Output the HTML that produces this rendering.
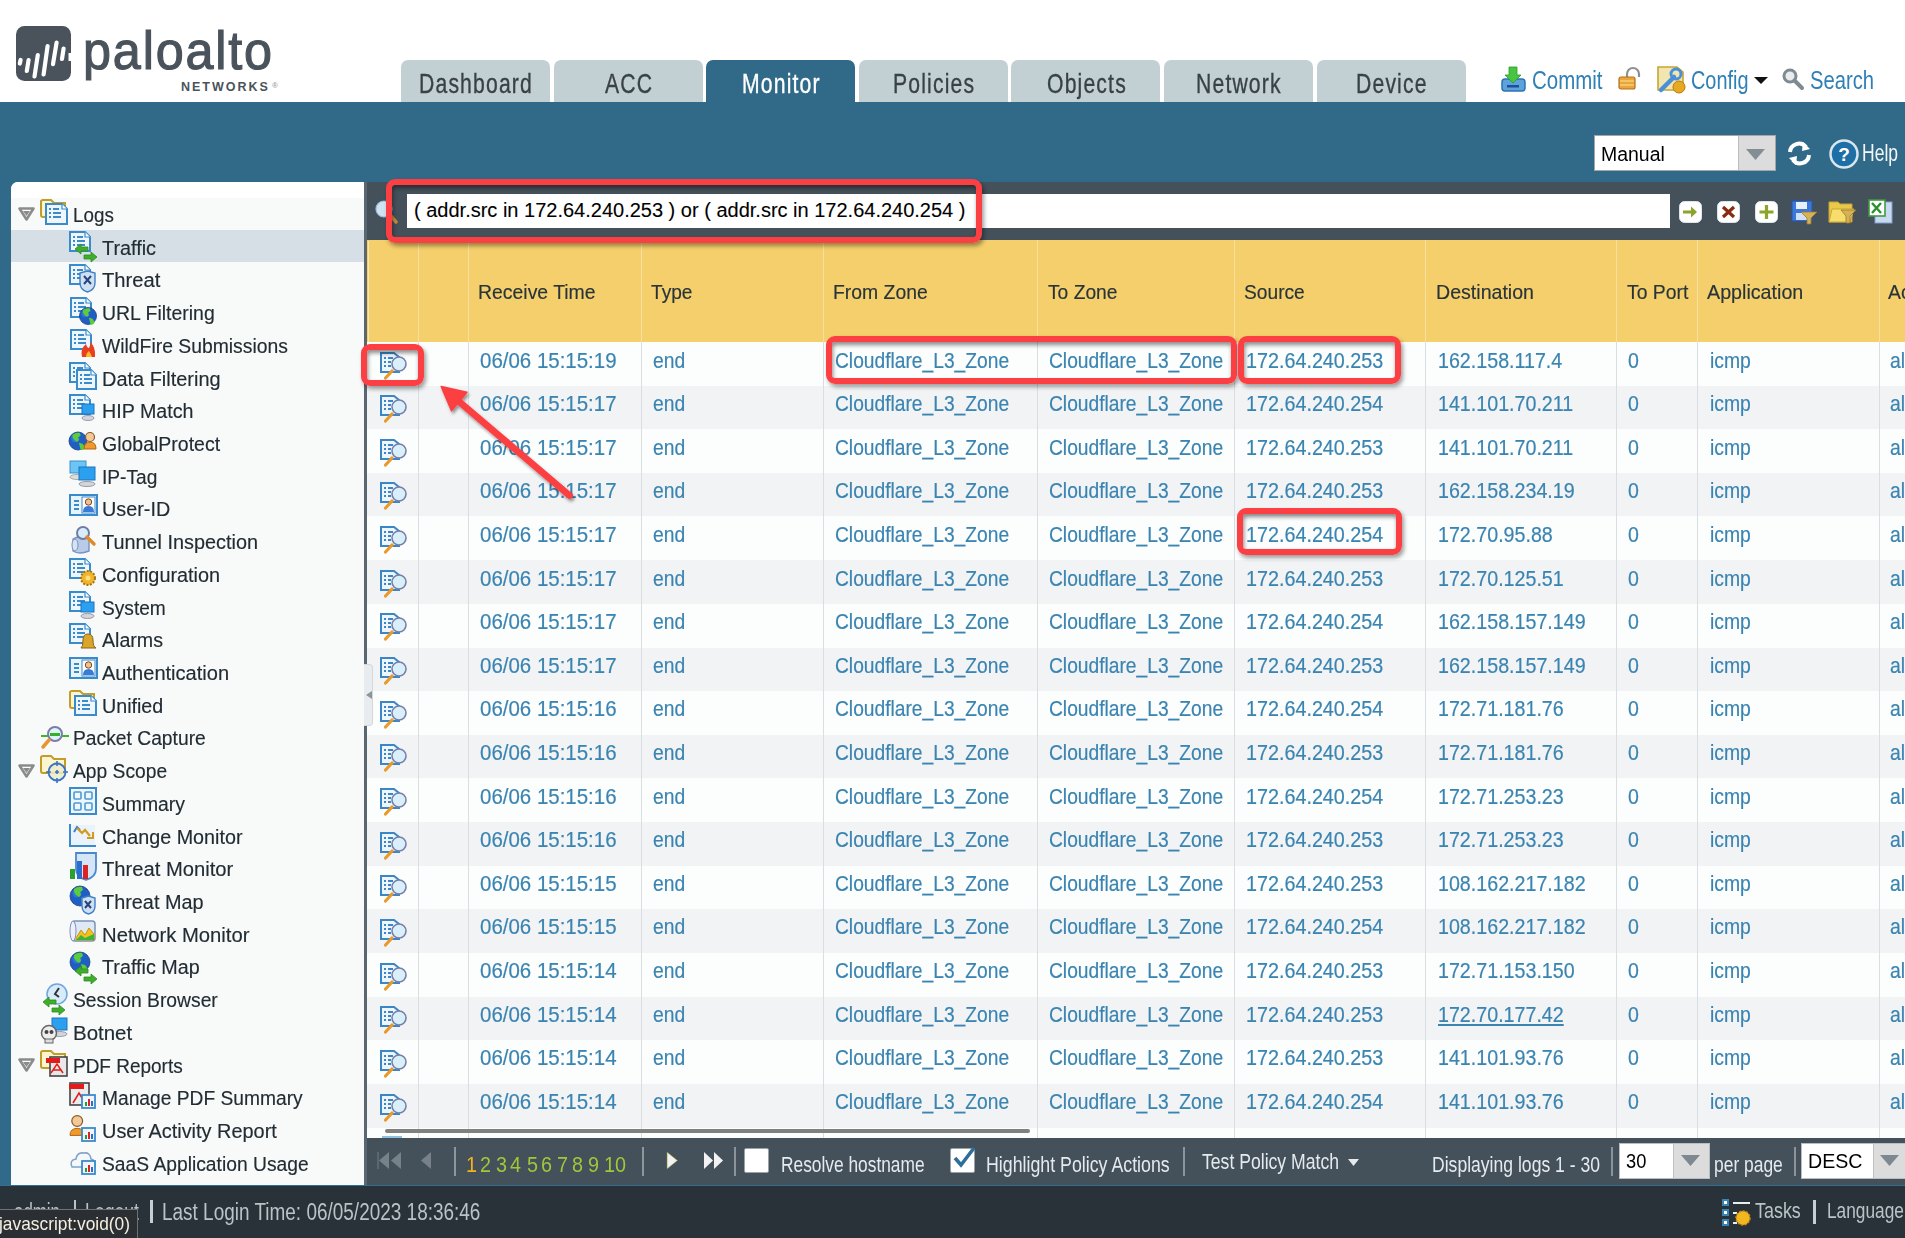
<!DOCTYPE html><html><head><meta charset="utf-8"><style>
*{margin:0;padding:0;box-sizing:border-box}
html,body{width:1905px;height:1238px;overflow:hidden;background:#fff;font-family:"Liberation Sans",sans-serif}
.abs{position:absolute}
.t{position:absolute;white-space:nowrap;line-height:normal;transform-origin:0 0}
svg{position:absolute;overflow:visible}
.tab{position:absolute;top:60px;height:42px;width:149px;background:#c2d0d4;border-radius:7px 7px 0 0}
.tab.on{background:#316a89}
</style></head><body>
<div class="abs" style="left:0.0px;top:0.0px;width:1905.0px;height:102.0px;background:#fff;"></div>
<svg style="left:16.2px;top:26.0px" width="55" height="55" viewBox="0 0 55 55"><rect x="0" y="0" width="55" height="55" rx="8.5" fill="#4a535b"/>
<g stroke="#fff" stroke-width="4.2" stroke-linecap="round">
<line x1="4.6" y1="34" x2="3.8" y2="37.5"/><line x1="12.6" y1="34" x2="10.8" y2="45"/><line x1="21.8" y1="29" x2="18.5" y2="50.5"/>
<line x1="31.6" y1="20" x2="27.6" y2="48.5"/><line x1="40.6" y1="16.5" x2="37" y2="38.2"/><line x1="47.6" y1="22.5" x2="46" y2="33"/>
</g><rect x="52.5" y="27" width="3" height="8" fill="#fff"/></svg>
<div class="t" style="left:83px;top:17.6px;font-size:55px;color:#4a535b;letter-spacing:2px;-webkit-text-stroke:1.2px #4a535b;transform-origin:0 49.8px;transform:scale(0.915,0.99)">paloalto</div>
<div class="t" style="left:181.0px;top:79.7px;font-size:12.5px;color:#4a535b;font-weight:bold;letter-spacing:2px;">NETWORKS</div>
<div class="t" style="left:272.0px;top:80.8px;font-size:8px;color:#8a9096;">&#174;</div>
<div class="tab" style="left:401.0px"></div>
<div class="t" style="left:419.0px;top:67.6px;font-size:27.5px;color:#394148;transform:scaleX(0.7700);letter-spacing:1.5px;-webkit-text-stroke:0.35px #394148;">Dashboard</div>
<div class="tab" style="left:553.6px"></div>
<div class="t" style="left:604.5px;top:67.6px;font-size:27.5px;color:#394148;transform:scaleX(0.7700);letter-spacing:1.5px;-webkit-text-stroke:0.35px #394148;">ACC</div>
<div class="tab on" style="left:706.2px"></div>
<div class="t" style="left:741.9px;top:67.6px;font-size:27.5px;color:#fff;transform:scaleX(0.7700);letter-spacing:1.5px;-webkit-text-stroke:0.35px #fff;">Monitor</div>
<div class="tab" style="left:858.8px"></div>
<div class="t" style="left:892.7px;top:67.6px;font-size:27.5px;color:#394148;transform:scaleX(0.7700);letter-spacing:1.5px;-webkit-text-stroke:0.35px #394148;">Policies</div>
<div class="tab" style="left:1011.4px"></div>
<div class="t" style="left:1046.5px;top:67.6px;font-size:27.5px;color:#394148;transform:scaleX(0.7700);letter-spacing:1.5px;-webkit-text-stroke:0.35px #394148;">Objects</div>
<div class="tab" style="left:1164.0px"></div>
<div class="t" style="left:1196.1px;top:67.6px;font-size:27.5px;color:#394148;transform:scaleX(0.7700);letter-spacing:1.5px;-webkit-text-stroke:0.35px #394148;">Network</div>
<div class="tab" style="left:1316.6px"></div>
<div class="t" style="left:1355.8px;top:67.6px;font-size:27.5px;color:#394148;transform:scaleX(0.7700);letter-spacing:1.5px;-webkit-text-stroke:0.35px #394148;">Device</div>
<svg style="left:1500.0px;top:66.0px" width="27" height="27" viewBox="0 0 27 27"><rect x="2" y="13" width="23" height="12" rx="3" fill="#5da2da" stroke="#2b74b4" stroke-width="1.5"/>
<rect x="7" y="19" width="12" height="2.5" fill="#1f4f99"/>
<path d="M9 1h8v8h4l-8 8-8-8h4z" fill="#47c540" stroke="#2f9a2a" stroke-width="0.8"/></svg>
<div class="t" style="left:1532.0px;top:65.4px;font-size:26px;color:#2f80b6;transform:scaleX(0.7873);">Commit</div>
<svg style="left:1618.0px;top:68.0px" width="24" height="22" viewBox="0 0 24 22"><path d="M9 9V6a6 6 0 0 1 12 0v3" fill="none" stroke="#8f8f8f" stroke-width="2.2"/>
<rect x="1" y="9" width="16" height="12" rx="2" fill="#eaa63a" stroke="#b4701e" stroke-width="1.2"/>
<line x1="2" y1="13" x2="16" y2="13" stroke="#f8d888" stroke-width="1.2"/><line x1="2" y1="17" x2="16" y2="17" stroke="#f8d888" stroke-width="1.2"/></svg>
<svg style="left:1657.0px;top:66.0px" width="28" height="27" viewBox="0 0 28 27"><path d="M1 1h19l6 5v18H1z" fill="#f1e6b0" stroke="#c7a533" stroke-width="1.6"/>
<path d="M4 24l13-13" stroke="#4a8fd8" stroke-width="4.5" stroke-linecap="round"/>
<circle cx="19" cy="8" r="5" fill="none" stroke="#4a8fd8" stroke-width="3"/>
<circle cx="22" cy="21" r="6" fill="#e8a922" stroke="#b57a10" stroke-width="1"/></svg>
<div class="t" style="left:1691.0px;top:65.3px;font-size:26px;color:#2f80b6;transform:scaleX(0.7652);">Config</div>
<svg style="left:1754.0px;top:77.0px" width="14" height="7" viewBox="0 0 14 7"><path d="M0 0h14l-7 7z" fill="#111"/></svg>
<svg style="left:1782.0px;top:68.0px" width="22" height="22" viewBox="0 0 22 22"><circle cx="8" cy="8" r="6" fill="#e8ecef" stroke="#7f8a91" stroke-width="3"/>
<line x1="12.5" y1="12.5" x2="20" y2="20" stroke="#7f8a91" stroke-width="4" stroke-linecap="round"/></svg>
<div class="t" style="left:1810.0px;top:65.3px;font-size:26px;color:#2f80b6;transform:scaleX(0.7771);">Search</div>
<div class="abs" style="left:0.0px;top:102.0px;width:1905.0px;height:1084.0px;background:#316a89;"></div>
<div class="abs" style="left:1594.0px;top:135.0px;width:182.0px;height:36.0px;background:#fff;border:1px solid #a6a6a6;"></div>
<div class="abs" style="left:1738.0px;top:136.0px;width:37.0px;height:34.0px;background:#dcdcdc;border-left:1px solid #bdbdbd;"></div>
<svg style="left:1746.0px;top:149.0px" width="19" height="11" viewBox="0 0 19 11"><path d="M0 0h19l-9.5 11z" fill="#848d94"/></svg>
<div class="t" style="left:1601.0px;top:142.7px;font-size:20px;color:#000;transform:scaleX(0.9727);">Manual</div>
<svg style="left:1786.0px;top:142.0px" width="27" height="23" viewBox="0 0 27 23"><path d="M4 10a9 9 0 0 1 16-5" fill="none" stroke="#fff" stroke-width="4"/>
<path d="M17 0l7 7-8 2z" fill="#fff"/>
<path d="M23 13a9 9 0 0 1-16 5" fill="none" stroke="#fff" stroke-width="4"/>
<path d="M10 23l-7-7 8-2z" fill="#fff"/></svg>
<svg style="left:1829.0px;top:139.0px" width="30" height="30" viewBox="0 0 30 30"><circle cx="15" cy="15" r="13.5" fill="#1d6fa6" stroke="#d8e6ef" stroke-width="2.5"/>
<text x="15" y="22" font-family="Liberation Sans" font-weight="bold" font-size="19" fill="#fff" text-anchor="middle">?</text></svg>
<div class="t" style="left:1862.0px;top:139.3px;font-size:24px;color:#f4f7f9;transform:scaleX(0.7296);">Help</div>
<div class="abs" style="left:11.0px;top:182.0px;width:353.0px;height:1004.0px;background:#f8fafa;border-radius:7px 0 0 0;"></div>
<div class="abs" style="left:11.0px;top:182.0px;width:353.0px;height:16.0px;background:#ffffff;border-radius:7px 0 0 0;"></div>
<svg style="left:18.0px;top:207.4px" width="17" height="14" viewBox="0 0 17 14"><path d="M1.5 1.5h14l-7 11z" fill="#fff" stroke="#8b8b8b" stroke-width="2.6" stroke-linejoin="round"/><path d="M5 4h7l-3.5 5z" fill="#8b8b8b"/></svg>
<svg style="left:40.0px;top:198.0px" width="30" height="32" viewBox="0 0 30 32"><path d="M1 3v14a2 2 0 0 0 2 2h22v-14h-11l-3-3h-8a2 2 0 0 0-2 1z" fill="#fbf5d0" stroke="#c39d2a" stroke-width="2"/><path d="M6 6h16l5 5v15h-21z" fill="#eef5fb" stroke="#3a8bcb" stroke-width="2"/><path d="M22 6v5h5" fill="#fff" stroke="#3a8bcb" stroke-width="1.2"/><g fill="#3a8bcb"><rect x="9" y="10" width="2" height="2"/><rect x="9" y="14" width="2" height="2"/><rect x="9" y="18" width="2" height="2"/><rect x="13" y="10" width="6" height="2"/><rect x="13" y="14" width="8" height="2"/><rect x="13" y="18" width="8" height="2"/></g></svg>
<div class="t" style="left:73.0px;top:203.9px;font-size:20px;color:#222c33;transform:scaleX(0.9406);-webkit-text-stroke:0.15px #222c33;">Logs</div>
<div class="abs" style="left:11.0px;top:229.8px;width:353.0px;height:32.7px;background:#d5dfe5;"></div>
<svg style="left:69.0px;top:230.7px" width="30" height="32" viewBox="0 0 30 32"><path d="M1 1h15l5 5v14h-20z" fill="#eef5fb" stroke="#3a8bcb" stroke-width="2"/><path d="M16 1v5h5" fill="#fff" stroke="#3a8bcb" stroke-width="1.2"/><g fill="#3a8bcb"><rect x="4" y="5" width="2" height="2"/><rect x="4" y="9" width="2" height="2"/><rect x="4" y="13" width="2" height="2"/><rect x="8" y="5" width="6" height="2"/><rect x="8" y="9" width="8" height="2"/><rect x="8" y="13" width="8" height="2"/></g><path d="M6 18l6-5v3h7v4h-7v3z" fill="#3fae2b" stroke="#2f8a20" stroke-width="0.8"/><path d="M28 26l-6-5v3h-7v4h7v3z" fill="#3fae2b" stroke="#2f8a20" stroke-width="0.8"/></svg>
<div class="t" style="left:102.0px;top:236.6px;font-size:20px;color:#222c33;transform:scaleX(0.9914);-webkit-text-stroke:0.15px #222c33;">Traffic</div>
<svg style="left:69.0px;top:263.4px" width="30" height="32" viewBox="0 0 30 32"><path d="M1 2h15l5 5v14h-20z" fill="#eef5fb" stroke="#3a8bcb" stroke-width="2"/><path d="M16 2v5h5" fill="#fff" stroke="#3a8bcb" stroke-width="1.2"/><g fill="#3a8bcb"><rect x="4" y="6" width="2" height="2"/><rect x="4" y="10" width="2" height="2"/><rect x="4" y="14" width="2" height="2"/><rect x="8" y="6" width="6" height="2"/><rect x="8" y="10" width="8" height="2"/><rect x="8" y="14" width="8" height="2"/></g><path d="M11 10l7.5 -2l7.5 2v9.5q0 7.6000000000000005 -7.5 9.5q-7.5 -1.9000000000000001 -7.5 -9.5z" fill="#cfe0f3" stroke="#3f7fc4" stroke-width="1.4"/><path d="M15 13l7 8M22 13l-7 8" stroke="#28457a" stroke-width="2"/></svg>
<div class="t" style="left:102.0px;top:269.3px;font-size:20px;color:#222c33;transform:scaleX(1.0102);-webkit-text-stroke:0.15px #222c33;">Threat</div>
<svg style="left:69.0px;top:296.2px" width="30" height="32" viewBox="0 0 30 32"><path d="M2 2h15l5 5v14h-20z" fill="#eef5fb" stroke="#3a8bcb" stroke-width="2"/><path d="M17 2v5h5" fill="#fff" stroke="#3a8bcb" stroke-width="1.2"/><g fill="#3a8bcb"><rect x="5" y="6" width="2" height="2"/><rect x="5" y="10" width="2" height="2"/><rect x="5" y="14" width="2" height="2"/><rect x="9" y="6" width="6" height="2"/><rect x="9" y="10" width="8" height="2"/><rect x="9" y="14" width="8" height="2"/></g><circle cx="19" cy="20" r="8.5" fill="#1f5fc4" stroke="#163f8a" stroke-width="0.8"/><circle cx="16.45" cy="17.45" r="3.825" fill="#3f86e0" opacity="0.6"/><path transform="translate(19,20) scale(0.85)" d="M-6 -7q4 -3 8 -2l1 3l-3 2l1 3l-2 2l-3 -2l-2 -3z M1 2l4 1l3 4l-2 3l-3 0l-1 -4z" fill="#5ccc3c"/></svg>
<div class="t" style="left:102.0px;top:302.0px;font-size:20px;color:#222c33;transform:scaleX(0.9719);-webkit-text-stroke:0.15px #222c33;">URL Filtering</div>
<svg style="left:69.0px;top:328.9px" width="30" height="32" viewBox="0 0 30 32"><path d="M2 1h15l5 5v14h-20z" fill="#eef5fb" stroke="#3a8bcb" stroke-width="2"/><path d="M17 1v5h5" fill="#fff" stroke="#3a8bcb" stroke-width="1.2"/><g fill="#3a8bcb"><rect x="5" y="5" width="2" height="2"/><rect x="5" y="9" width="2" height="2"/><rect x="5" y="13" width="2" height="2"/><rect x="9" y="5" width="6" height="2"/><rect x="9" y="9" width="8" height="2"/><rect x="9" y="13" width="8" height="2"/></g><path d="M13 28q-2-8 4-13q1 4 3 4q2-3 1-6q6 5 5 15z" fill="#e8401f"/><path d="M17 28q0-4 3-6q2 3 3 6z" fill="#ffb830"/></svg>
<div class="t" style="left:102.0px;top:334.7px;font-size:20px;color:#222c33;transform:scaleX(0.9670);-webkit-text-stroke:0.15px #222c33;">WildFire Submissions</div>
<svg style="left:69.0px;top:361.6px" width="30" height="32" viewBox="0 0 30 32"><path d="M1 1h15l5 5v14h-20z" fill="#eef5fb" stroke="#3a8bcb" stroke-width="2"/><path d="M16 1v5h5" fill="#fff" stroke="#3a8bcb" stroke-width="1.2"/><g fill="#3a8bcb"><rect x="4" y="5" width="2" height="2"/><rect x="4" y="9" width="2" height="2"/><rect x="4" y="13" width="2" height="2"/><rect x="8" y="5" width="6" height="2"/><rect x="8" y="9" width="8" height="2"/><rect x="8" y="13" width="8" height="2"/></g><path d="M8 8h14l5 5v14h-19z" fill="#eef5fb" stroke="#3a8bcb" stroke-width="2"/><path d="M22 8v5h5" fill="#fff" stroke="#3a8bcb" stroke-width="1.2"/><g fill="#3a8bcb"><rect x="11" y="12" width="2" height="2"/><rect x="11" y="16" width="2" height="2"/><rect x="11" y="20" width="2" height="2"/><rect x="15" y="12" width="6" height="2"/><rect x="15" y="16" width="8" height="2"/><rect x="15" y="20" width="8" height="2"/></g></svg>
<div class="t" style="left:102.0px;top:367.5px;font-size:20px;color:#222c33;transform:scaleX(0.9972);-webkit-text-stroke:0.15px #222c33;">Data Filtering</div>
<svg style="left:69.0px;top:394.3px" width="30" height="32" viewBox="0 0 30 32"><path d="M1 1h15l5 5v14h-20z" fill="#eef5fb" stroke="#3a8bcb" stroke-width="2"/><path d="M16 1v5h5" fill="#fff" stroke="#3a8bcb" stroke-width="1.2"/><g fill="#3a8bcb"><rect x="4" y="5" width="2" height="2"/><rect x="4" y="9" width="2" height="2"/><rect x="4" y="13" width="2" height="2"/><rect x="8" y="5" width="6" height="2"/><rect x="8" y="9" width="8" height="2"/><rect x="8" y="13" width="8" height="2"/></g><rect x="13" y="10" width="12" height="10" fill="#2aa0ee" stroke="#1b74c0" stroke-width="1"/><ellipse cx="19.0" cy="24" rx="6.0" ry="2.5" fill="#d4d4dc" stroke="#9a9aa8" stroke-width="1"/></svg>
<div class="t" style="left:102.0px;top:400.2px;font-size:20px;color:#222c33;transform:scaleX(0.9837);-webkit-text-stroke:0.15px #222c33;">HIP Match</div>
<svg style="left:69.0px;top:427.0px" width="30" height="32" viewBox="0 0 30 32"><circle cx="9" cy="14" r="9" fill="#1f5fc4" stroke="#163f8a" stroke-width="0.8"/><circle cx="6.3" cy="11.3" r="4.05" fill="#3f86e0" opacity="0.6"/><path transform="translate(9,14) scale(0.9)" d="M-6 -7q4 -3 8 -2l1 3l-3 2l1 3l-2 2l-3 -2l-2 -3z M1 2l4 1l3 4l-2 3l-3 0l-1 -4z" fill="#5ccc3c"/><circle cx="21.0" cy="10.0" r="4.5" fill="#f3c999" stroke="#8a5a26" stroke-width="1.2"/><path d="M15 22.0q0 -7 6.0 -7q6.0 0 6.0 7z" fill="#ef9a2c" stroke="#b36412" stroke-width="1"/></svg>
<div class="t" style="left:102.0px;top:432.9px;font-size:20px;color:#222c33;transform:scaleX(0.9745);-webkit-text-stroke:0.15px #222c33;">GlobalProtect</div>
<svg style="left:69.0px;top:459.8px" width="30" height="32" viewBox="0 0 30 32"><rect x="1" y="1" width="16" height="12" fill="#6cc6f5" stroke="#3a90cc"/><ellipse cx="8" cy="17" rx="7" ry="2.5" fill="#ddd" stroke="#aaa"/><rect x="10" y="7" width="16" height="13" fill="#2aa0ee" stroke="#1b74c0" stroke-width="1"/><ellipse cx="18.0" cy="24" rx="8.0" ry="2.5" fill="#d4d4dc" stroke="#9a9aa8" stroke-width="1"/></svg>
<div class="t" style="left:102.0px;top:465.6px;font-size:20px;color:#222c33;transform:scaleX(0.9565);-webkit-text-stroke:0.15px #222c33;">IP-Tag</div>
<svg style="left:69.0px;top:492.5px" width="30" height="32" viewBox="0 0 30 32"><rect x="1" y="2" width="27" height="20" fill="#e9f3fb" stroke="#3a8bcb" stroke-width="2"/><g fill="#3a8bcb"><rect x="5" y="7" width="5" height="2"/><rect x="5" y="11" width="5" height="2"/><rect x="5" y="15" width="5" height="2"/></g><rect x="13" y="4" width="13" height="16" fill="#fff" stroke="#3a8bcb" stroke-width="1"/><circle cx="19.5" cy="9" r="3.2" fill="#f1c28f" stroke="#7a4a1a" stroke-width="1"/><path d="M14 19q0 -6 5.5 -6q5.5 0 5.5 6z" fill="#3a7bd5"/></svg>
<div class="t" style="left:102.0px;top:498.3px;font-size:20px;color:#222c33;transform:scaleX(0.9902);-webkit-text-stroke:0.15px #222c33;">User-ID</div>
<svg style="left:69.0px;top:525.2px" width="30" height="32" viewBox="0 0 30 32"><path d="M4 14q6-4 16 0v12q-10 4-16 0z" fill="#b9cbe6" stroke="#7693c4" stroke-width="1.4"/><ellipse cx="6" cy="20" rx="3" ry="6" fill="#d8e3f2" stroke="#7693c4"/><circle cx="14" cy="8" r="6" fill="#d9ecfb" stroke="#6c7ea6" stroke-width="2"/><path d="M18 12l7 7" stroke="#e08a2a" stroke-width="3.5" stroke-linecap="round"/></svg>
<div class="t" style="left:102.0px;top:531.1px;font-size:20px;color:#222c33;transform:scaleX(0.9932);-webkit-text-stroke:0.15px #222c33;">Tunnel Inspection</div>
<svg style="left:69.0px;top:557.9px" width="30" height="32" viewBox="0 0 30 32"><path d="M1 1h15l5 5v14h-20z" fill="#eef5fb" stroke="#3a8bcb" stroke-width="2"/><path d="M16 1v5h5" fill="#fff" stroke="#3a8bcb" stroke-width="1.2"/><g fill="#3a8bcb"><rect x="4" y="5" width="2" height="2"/><rect x="4" y="9" width="2" height="2"/><rect x="4" y="13" width="2" height="2"/><rect x="8" y="5" width="6" height="2"/><rect x="8" y="9" width="8" height="2"/><rect x="8" y="13" width="8" height="2"/></g><circle cx="19" cy="20" r="7" fill="#f0b52a" stroke="#a87410" stroke-width="2" stroke-dasharray="2 1.5"/><circle cx="19" cy="20" r="2.5" fill="#ffe07a"/></svg>
<div class="t" style="left:102.0px;top:563.8px;font-size:20px;color:#222c33;transform:scaleX(0.9927);-webkit-text-stroke:0.15px #222c33;">Configuration</div>
<svg style="left:69.0px;top:590.6px" width="30" height="32" viewBox="0 0 30 32"><path d="M1 1h15l5 5v14h-20z" fill="#eef5fb" stroke="#3a8bcb" stroke-width="2"/><path d="M16 1v5h5" fill="#fff" stroke="#3a8bcb" stroke-width="1.2"/><g fill="#3a8bcb"><rect x="4" y="5" width="2" height="2"/><rect x="4" y="9" width="2" height="2"/><rect x="4" y="13" width="2" height="2"/><rect x="8" y="5" width="6" height="2"/><rect x="8" y="9" width="8" height="2"/><rect x="8" y="13" width="8" height="2"/></g><rect x="12" y="11" width="13" height="10" fill="#2aa0ee" stroke="#1b74c0" stroke-width="1"/><ellipse cx="18.5" cy="25" rx="6.5" ry="2.5" fill="#d4d4dc" stroke="#9a9aa8" stroke-width="1"/></svg>
<div class="t" style="left:102.0px;top:596.5px;font-size:20px;color:#222c33;transform:scaleX(0.9567);-webkit-text-stroke:0.15px #222c33;">System</div>
<svg style="left:69.0px;top:623.4px" width="30" height="32" viewBox="0 0 30 32"><path d="M1 1h15l5 5v14h-20z" fill="#eef5fb" stroke="#3a8bcb" stroke-width="2"/><path d="M16 1v5h5" fill="#fff" stroke="#3a8bcb" stroke-width="1.2"/><g fill="#3a8bcb"><rect x="4" y="5" width="2" height="2"/><rect x="4" y="9" width="2" height="2"/><rect x="4" y="13" width="2" height="2"/><rect x="8" y="5" width="6" height="2"/><rect x="8" y="9" width="8" height="2"/><rect x="8" y="13" width="8" height="2"/></g><path d="M12 25q2-1 2-8q0-6 5-6q5 0 5 6q0 7 3 8z" fill="#d9a52a" stroke="#8a6414" stroke-width="1"/></svg>
<div class="t" style="left:102.0px;top:629.2px;font-size:20px;color:#222c33;transform:scaleX(0.9804);-webkit-text-stroke:0.15px #222c33;">Alarms</div>
<svg style="left:69.0px;top:656.1px" width="30" height="32" viewBox="0 0 30 32"><rect x="1" y="2" width="27" height="20" fill="#e9f3fb" stroke="#3a8bcb" stroke-width="2"/><g fill="#3a8bcb"><rect x="5" y="7" width="5" height="2"/><rect x="5" y="11" width="5" height="2"/><rect x="5" y="15" width="5" height="2"/></g><rect x="13" y="4" width="13" height="16" fill="#fff" stroke="#3a8bcb" stroke-width="1"/><circle cx="19.5" cy="9" r="3.2" fill="#f1c28f" stroke="#7a4a1a" stroke-width="1"/><path d="M14 19q0 -6 5.5 -6q5.5 0 5.5 6z" fill="#3a7bd5"/></svg>
<div class="t" style="left:102.0px;top:661.9px;font-size:20px;color:#222c33;transform:scaleX(1.0025);-webkit-text-stroke:0.15px #222c33;">Authentication</div>
<svg style="left:69.0px;top:688.8px" width="30" height="32" viewBox="0 0 30 32"><path d="M1 3v14a2 2 0 0 0 2 2h22v-14h-11l-3-3h-8a2 2 0 0 0-2 1z" fill="#fbf5d0" stroke="#c39d2a" stroke-width="2"/><path d="M6 7h16l5 5v14h-21z" fill="#eef5fb" stroke="#3a8bcb" stroke-width="2"/><path d="M22 7v5h5" fill="#fff" stroke="#3a8bcb" stroke-width="1.2"/><g fill="#3a8bcb"><rect x="9" y="11" width="2" height="2"/><rect x="9" y="15" width="2" height="2"/><rect x="9" y="19" width="2" height="2"/><rect x="13" y="11" width="6" height="2"/><rect x="13" y="15" width="8" height="2"/><rect x="13" y="19" width="8" height="2"/></g></svg>
<div class="t" style="left:102.0px;top:694.7px;font-size:20px;color:#222c33;transform:scaleX(0.9831);-webkit-text-stroke:0.15px #222c33;">Unified</div>
<svg style="left:40.0px;top:721.5px" width="30" height="32" viewBox="0 0 30 32"><line x1="1" y1="14" x2="29" y2="14" stroke="#3fb52a" stroke-width="2"/><circle cx="15" cy="12" r="7" fill="#dff3fb" stroke="#7c7ca8" stroke-width="2"/><rect x="10" y="11" width="10" height="3" fill="#34b02a"/><path d="M9 18l-6 7" stroke="#e8962e" stroke-width="3.5" stroke-linecap="round"/></svg>
<div class="t" style="left:73.0px;top:727.4px;font-size:20px;color:#222c33;transform:scaleX(0.9632);-webkit-text-stroke:0.15px #222c33;">Packet Capture</div>
<svg style="left:18.0px;top:763.6px" width="17" height="14" viewBox="0 0 17 14"><path d="M1.5 1.5h14l-7 11z" fill="#fff" stroke="#8b8b8b" stroke-width="2.6" stroke-linejoin="round"/><path d="M5 4h7l-3.5 5z" fill="#8b8b8b"/></svg>
<svg style="left:40.0px;top:754.2px" width="30" height="32" viewBox="0 0 30 32"><path d="M1 3v14a2 2 0 0 0 2 2h22v-14h-11l-3-3h-8a2 2 0 0 0-2 1z" fill="#fbf5d0" stroke="#c39d2a" stroke-width="2"/><circle cx="17" cy="18" r="8.5" fill="#ecebc8" fill-opacity="0.85" stroke="#3b72c4" stroke-width="1.8"/><path d="M17 7v5M17 24v5M6 18h5M23 18h5M15 18h4M17 16v4" stroke="#3b72c4" stroke-width="1.6"/></svg>
<div class="t" style="left:73.0px;top:760.1px;font-size:20px;color:#222c33;transform:scaleX(0.9614);-webkit-text-stroke:0.15px #222c33;">App Scope</div>
<svg style="left:69.0px;top:787.0px" width="30" height="32" viewBox="0 0 30 32"><rect x="1" y="1" width="26" height="26" fill="#eef6fc" stroke="#3a8bcb" stroke-width="2"/><g fill="none" stroke="#4a9ad6" stroke-width="1.6"><rect x="5" y="5" width="7" height="7" rx="1"/><rect x="16" y="5" width="7" height="7" rx="1"/><rect x="5" y="16" width="7" height="7" rx="1"/><rect x="16" y="16" width="7" height="7" rx="1"/></g></svg>
<div class="t" style="left:102.0px;top:792.8px;font-size:20px;color:#222c33;transform:scaleX(0.9700);-webkit-text-stroke:0.15px #222c33;">Summary</div>
<svg style="left:69.0px;top:819.7px" width="30" height="32" viewBox="0 0 30 32"><path d="M1 4v22h26" fill="none" stroke="#3a8bcb" stroke-width="2"/><path d="M2 25V5h24v20z" fill="#eaf3fb"/><path d="M5 12l3-5l3 3" fill="none" stroke="#3a7fd0" stroke-width="2"/><path d="M8 8l5 5l3-3l5 6" fill="none" stroke="#d49a1a" stroke-width="2.2"/><path d="M18 18h6v-6" fill="none" stroke="#d49a1a" stroke-width="2"/></svg>
<div class="t" style="left:102.0px;top:825.5px;font-size:20px;color:#222c33;transform:scaleX(0.9873);-webkit-text-stroke:0.15px #222c33;">Change Monitor</div>
<svg style="left:69.0px;top:852.4px" width="30" height="32" viewBox="0 0 30 32"><path d="M7 1h20v16q0 8-10 11q-10-3-10-11z" fill="#d5e5f5" stroke="#4a88cc" stroke-width="1.8"/><rect x="1" y="17" width="5" height="10" fill="#2ea02e"/><rect x="8" y="9" width="5" height="18" fill="#2a6fd0"/><rect x="14" y="13" width="5" height="14" fill="#dd2222"/></svg>
<div class="t" style="left:102.0px;top:858.3px;font-size:20px;color:#222c33;transform:scaleX(1.0095);-webkit-text-stroke:0.15px #222c33;">Threat Monitor</div>
<svg style="left:69.0px;top:885.1px" width="30" height="32" viewBox="0 0 30 32"><circle cx="11" cy="11" r="10" fill="#1f5fc4" stroke="#163f8a" stroke-width="0.8"/><circle cx="8.0" cy="8.0" r="4.5" fill="#3f86e0" opacity="0.6"/><path transform="translate(11,11) scale(1.0)" d="M-6 -7q4 -3 8 -2l1 3l-3 2l1 3l-2 2l-3 -2l-2 -3z M1 2l4 1l3 4l-2 3l-3 0l-1 -4z" fill="#5ccc3c"/><path d="M13 13l6.5 -2l6.5 2v8.0q0 6.4 -6.5 8.0q-6.5 -1.6 -6.5 -8.0z" fill="#cfe0f3" stroke="#3f7fc4" stroke-width="1.4"/><path d="M16 16l6 7M22 16l-6 7" stroke="#28457a" stroke-width="2"/></svg>
<div class="t" style="left:102.0px;top:891.0px;font-size:20px;color:#222c33;transform:scaleX(0.9933);-webkit-text-stroke:0.15px #222c33;">Threat Map</div>
<svg style="left:69.0px;top:917.8px" width="30" height="32" viewBox="0 0 30 32"><rect x="3" y="3" width="23" height="20" rx="3" fill="#dfe9f5" stroke="#7b93b8" stroke-width="1.5"/><ellipse cx="4" cy="13" rx="3" ry="10" fill="#eef" stroke="#7b93b8"/><path d="M7 20l5-8l4 5l4-7l5 6v6h-18z" fill="#f2c21a" stroke="#c99510" stroke-width="1"/><path d="M7 22l5-5l4 3l9-4v6h-18z" fill="#3cb43a"/></svg>
<div class="t" style="left:102.0px;top:923.7px;font-size:20px;color:#222c33;transform:scaleX(1.0131);-webkit-text-stroke:0.15px #222c33;">Network Monitor</div>
<svg style="left:69.0px;top:950.6px" width="30" height="32" viewBox="0 0 30 32"><circle cx="11" cy="11" r="10" fill="#1f5fc4" stroke="#163f8a" stroke-width="0.8"/><circle cx="8.0" cy="8.0" r="4.5" fill="#3f86e0" opacity="0.6"/><path transform="translate(11,11) scale(1.0)" d="M-6 -7q4 -3 8 -2l1 3l-3 2l1 3l-2 2l-3 -2l-2 -3z M1 2l4 1l3 4l-2 3l-3 0l-1 -4z" fill="#5ccc3c"/><path d="M6 20l6-5v3h7v4h-7v3z" fill="#3fae2b" stroke="#2f8a20" stroke-width="0.8"/><path d="M28 28l-6-5v3h-7v4h7v3z" fill="#3fae2b" stroke="#2f8a20" stroke-width="0.8"/></svg>
<div class="t" style="left:102.0px;top:956.4px;font-size:20px;color:#222c33;transform:scaleX(0.9875);-webkit-text-stroke:0.15px #222c33;">Traffic Map</div>
<svg style="left:40.0px;top:983.3px" width="30" height="32" viewBox="0 0 30 32"><circle cx="17" cy="11" r="10" fill="#d7ebfa" stroke="#6fa4dc" stroke-width="1.5"/><path d="M19 5l-4 6l4 3" fill="none" stroke="#333" stroke-width="2"/><path d="M3 19l6-5v3h7v4h-7v3z" fill="#3fae2b" stroke="#2f8a20" stroke-width="0.8"/><path d="M25 27l-6-5v3h-7v4h7v3z" fill="#3fae2b" stroke="#2f8a20" stroke-width="0.8"/></svg>
<div class="t" style="left:73.0px;top:989.1px;font-size:20px;color:#222c33;transform:scaleX(0.9649);-webkit-text-stroke:0.15px #222c33;">Session Browser</div>
<svg style="left:40.0px;top:1016.0px" width="30" height="32" viewBox="0 0 30 32"><rect x="12" y="2" width="15" height="12" fill="#2aa0ee" stroke="#1b74c0" stroke-width="1"/><ellipse cx="19.5" cy="18" rx="7.5" ry="2.5" fill="#d4d4dc" stroke="#9a9aa8" stroke-width="1"/><circle cx="9" cy="17" r="7.5" fill="#eee" stroke="#666" stroke-width="1.5"/><circle cx="6.5" cy="16" r="2" fill="#444"/><circle cx="11.5" cy="16" r="2" fill="#444"/><rect x="5" y="23" width="8" height="4" fill="#ddd" stroke="#666"/></svg>
<div class="t" style="left:73.0px;top:1021.9px;font-size:20px;color:#222c33;transform:scaleX(1.0234);-webkit-text-stroke:0.15px #222c33;">Botnet</div>
<svg style="left:18.0px;top:1058.1px" width="17" height="14" viewBox="0 0 17 14"><path d="M1.5 1.5h14l-7 11z" fill="#fff" stroke="#8b8b8b" stroke-width="2.6" stroke-linejoin="round"/><path d="M5 4h7l-3.5 5z" fill="#8b8b8b"/></svg>
<svg style="left:40.0px;top:1048.7px" width="30" height="32" viewBox="0 0 30 32"><path d="M1 3v14a2 2 0 0 0 2 2h22v-14h-11l-3-3h-8a2 2 0 0 0-2 1z" fill="#fbf5d0" stroke="#c39d2a" stroke-width="2"/><rect x="10" y="8" width="17" height="19" fill="#e8e8e8" stroke="#444" stroke-width="1.6"/><rect x="6" y="9" width="14" height="5" fill="#e31b1b"/><path d="M11 24l6-9l6 9M13 21h8" fill="none" stroke="#e31b1b" stroke-width="1.5"/></svg>
<div class="t" style="left:73.0px;top:1054.6px;font-size:20px;color:#222c33;transform:scaleX(0.9490);-webkit-text-stroke:0.15px #222c33;">PDF Reports</div>
<svg style="left:69.0px;top:1081.4px" width="30" height="32" viewBox="0 0 30 32"><rect x="1" y="2" width="19" height="22" fill="#ececec" stroke="#444" stroke-width="1.6"/><rect x="0" y="3" width="15" height="5" fill="#e31b1b"/><path d="M4 22l6-10l6 10" fill="none" stroke="#e31b1b" stroke-width="1.5"/><rect x="13" y="14" width="13" height="13" fill="#eef6fc" stroke="#3a8bcb" stroke-width="1.8"/><rect x="16" y="21" width="2" height="4" fill="#2e9a2e"/><rect x="19" y="18" width="2" height="7" fill="#d22"/><rect x="22" y="20" width="2" height="5" fill="#2a6fd0"/></svg>
<div class="t" style="left:102.0px;top:1087.3px;font-size:20px;color:#222c33;transform:scaleX(0.9604);-webkit-text-stroke:0.15px #222c33;">Manage PDF Summary</div>
<svg style="left:69.0px;top:1114.2px" width="30" height="32" viewBox="0 0 30 32"><circle cx="8.2" cy="7.0" r="5.3999999999999995" fill="#f3c999" stroke="#8a5a26" stroke-width="1.2"/><path d="M1 21.4q0 -7 7.199999999999999 -7q7.199999999999999 0 7.199999999999999 7z" fill="#ef9a2c" stroke="#b36412" stroke-width="1"/><rect x="13" y="14" width="13" height="13" fill="#eef6fc" stroke="#3a8bcb" stroke-width="1.8"/><rect x="16" y="21" width="2" height="4" fill="#2e9a2e"/><rect x="19" y="18" width="2" height="7" fill="#d22"/><rect x="22" y="20" width="2" height="5" fill="#2a6fd0"/></svg>
<div class="t" style="left:102.0px;top:1120.0px;font-size:20px;color:#222c33;transform:scaleX(0.9954);-webkit-text-stroke:0.15px #222c33;">User Activity Report</div>
<svg style="left:69.0px;top:1146.9px" width="30" height="32" viewBox="0 0 30 32"><path d="M3 20q-3-7 4-8q1-7 8-6q6-1 7 6q5 1 4 8z" fill="#f4f8fb" stroke="#7fa3c4" stroke-width="1.5"/><rect x="13" y="14" width="13" height="13" fill="#eef6fc" stroke="#3a8bcb" stroke-width="1.8"/><rect x="16" y="21" width="2" height="4" fill="#2e9a2e"/><rect x="19" y="18" width="2" height="7" fill="#d22"/><rect x="22" y="20" width="2" height="5" fill="#2a6fd0"/></svg>
<div class="t" style="left:102.0px;top:1152.7px;font-size:20px;color:#222c33;transform:scaleX(0.9631);-webkit-text-stroke:0.15px #222c33;">SaaS Application Usage</div>
<div class="abs" style="left:364.0px;top:182.0px;width:3.0px;height:1004.0px;background:#5b6770;"></div>
<div class="abs" style="left:367.0px;top:182.0px;width:1538.0px;height:58.0px;background:#44515a;"></div>
<svg style="left:375.0px;top:200.0px" width="25" height="25" viewBox="0 0 25 25"><circle cx="9" cy="9" r="8" fill="#cfe3f5" stroke="#9fbddb" stroke-width="1.2"/><path d="M15 15l6 7" stroke="#c98a3a" stroke-width="3.5" stroke-linecap="round"/></svg>
<div class="abs" style="left:407.0px;top:194.0px;width:1263.0px;height:34.2px;background:#fff;"></div>
<div class="t" style="left:414.0px;top:199.1px;font-size:20px;color:#000;-webkit-text-stroke:0.1px #000;">( addr.src in 172.64.240.253 ) or ( addr.src in 172.64.240.254 )</div>
<svg style="left:1679.0px;top:200.5px" width="23" height="22" viewBox="0 0 23 22"><rect x="0.5" y="0.5" width="22" height="21" rx="5" fill="#fff" stroke="#dfe6ea" stroke-width="1"/><path d="M4 11h11" stroke="#8aa52a" stroke-width="3"/><path d="M12 5.5l6 5.5-6 5.5z" fill="#8aa52a"/></svg>
<svg style="left:1717.0px;top:200.5px" width="23" height="22" viewBox="0 0 23 22"><rect x="0.5" y="0.5" width="22" height="21" rx="5" fill="#fff" stroke="#dfe6ea" stroke-width="1"/><path d="M6 6l11 10M17 6l-11 10" stroke="#8a2a10" stroke-width="3.2"/></svg>
<svg style="left:1755.0px;top:200.5px" width="23" height="22" viewBox="0 0 23 22"><rect x="0.5" y="0.5" width="22" height="21" rx="5" fill="#fff" stroke="#dfe6ea" stroke-width="1"/><path d="M11.5 4v14M4.5 11h14" stroke="#8aa52a" stroke-width="3.2"/></svg>
<svg style="left:1791.0px;top:200.0px" width="27" height="24" viewBox="0 0 27 24"><rect x="1" y="1" width="20" height="20" fill="#3b78d8" stroke="#2456b0"/><rect x="5" y="2" width="11" height="7" fill="#e8f0fb"/><rect x="5" y="13" width="11" height="7" fill="#cfe0f7"/><path d="M10 12h16l-6 6v6h-4v-6z" fill="#d5b25a" stroke="#9c7a28" stroke-width="0.8"/></svg>
<svg style="left:1828.0px;top:198.0px" width="29" height="26" viewBox="0 0 29 26"><path d="M1 4h9l2 2h12v18h-23z" fill="#e9c84a" stroke="#c7a233" stroke-width="1"/><path d="M4 11h22l-4 13h-21z" fill="#f7de6c" stroke="#caa535"/><path d="M13 12h15l-6 6v7h-4v-7z" fill="#d5b25a" stroke="#9c7a28" stroke-width="0.8"/></svg>
<svg style="left:1868.0px;top:198.0px" width="25" height="26" viewBox="0 0 25 26"><rect x="7" y="4" width="17" height="21" fill="#c9daf0" stroke="#7ea0cf"/><rect x="1" y="2" width="16" height="16" fill="#fff" stroke="#3f9a3f" stroke-width="1.6"/><path d="M4 5l9 10M13 5l-9 10" stroke="#2e8f2e" stroke-width="2.4"/></svg>
<div class="abs" style="left:367.0px;top:240.0px;width:1538.0px;height:102.0px;background:#f4cf6b;"></div>
<div class="abs" style="left:368.0px;top:241.0px;width:1.0px;height:101.0px;background:#fbe7ad;"></div>
<div class="abs" style="left:418.0px;top:240.0px;width:1.0px;height:102.0px;background:#f9e0a0;"></div>
<div class="abs" style="left:468.4px;top:240.0px;width:1.0px;height:102.0px;background:#f9e0a0;"></div>
<div class="abs" style="left:641.0px;top:240.0px;width:1.0px;height:102.0px;background:#f9e0a0;"></div>
<div class="abs" style="left:823.0px;top:240.0px;width:1.0px;height:102.0px;background:#f9e0a0;"></div>
<div class="abs" style="left:1037.0px;top:240.0px;width:1.0px;height:102.0px;background:#f9e0a0;"></div>
<div class="abs" style="left:1234.0px;top:240.0px;width:1.0px;height:102.0px;background:#f9e0a0;"></div>
<div class="abs" style="left:1425.0px;top:240.0px;width:1.0px;height:102.0px;background:#f9e0a0;"></div>
<div class="abs" style="left:1616.0px;top:240.0px;width:1.0px;height:102.0px;background:#f9e0a0;"></div>
<div class="abs" style="left:1697.0px;top:240.0px;width:1.0px;height:102.0px;background:#f9e0a0;"></div>
<div class="abs" style="left:1879.0px;top:240.0px;width:1.0px;height:102.0px;background:#f9e0a0;"></div>
<div class="t" style="left:478.0px;top:281.4px;font-size:20px;color:#28343a;transform:scaleX(0.9706);-webkit-text-stroke:0.15px #28343a;">Receive Time</div>
<div class="t" style="left:651.0px;top:281.4px;font-size:20px;color:#28343a;transform:scaleX(0.9571);-webkit-text-stroke:0.15px #28343a;">Type</div>
<div class="t" style="left:833.0px;top:281.4px;font-size:20px;color:#28343a;transform:scaleX(0.9692);-webkit-text-stroke:0.15px #28343a;">From Zone</div>
<div class="t" style="left:1047.5px;top:281.4px;font-size:20px;color:#28343a;transform:scaleX(0.9615);-webkit-text-stroke:0.15px #28343a;">To Zone</div>
<div class="t" style="left:1243.5px;top:281.4px;font-size:20px;color:#28343a;transform:scaleX(0.9594);-webkit-text-stroke:0.15px #28343a;">Source</div>
<div class="t" style="left:1435.5px;top:281.4px;font-size:20px;color:#28343a;transform:scaleX(0.9794);-webkit-text-stroke:0.15px #28343a;">Destination</div>
<div class="t" style="left:1626.5px;top:281.4px;font-size:20px;color:#28343a;transform:scaleX(0.9673);-webkit-text-stroke:0.15px #28343a;">To Port</div>
<div class="t" style="left:1706.5px;top:281.4px;font-size:20px;color:#28343a;transform:scaleX(0.9842);-webkit-text-stroke:0.15px #28343a;">Application</div>
<div class="t" style="left:1888.0px;top:281.4px;font-size:20px;color:#28343a;transform:scaleX(0.9700);-webkit-text-stroke:0.15px #28343a;">Ac</div>
<div class="abs" style="left:367.0px;top:342.0px;width:1538.0px;height:796.0px;background:#fbfcfc;"></div>
<div class="abs" style="left:367.0px;top:342.0px;width:1538.0px;height:43.6px;background:#fcfdfd;"></div>
<div class="abs" style="left:367.0px;top:385.6px;width:1538.0px;height:43.6px;background:#f2f3f5;"></div>
<div class="abs" style="left:367.0px;top:429.3px;width:1538.0px;height:43.6px;background:#fcfdfd;"></div>
<div class="abs" style="left:367.0px;top:472.9px;width:1538.0px;height:43.6px;background:#f2f3f5;"></div>
<div class="abs" style="left:367.0px;top:516.6px;width:1538.0px;height:43.6px;background:#fcfdfd;"></div>
<div class="abs" style="left:367.0px;top:560.2px;width:1538.0px;height:43.6px;background:#f2f3f5;"></div>
<div class="abs" style="left:367.0px;top:603.9px;width:1538.0px;height:43.6px;background:#fcfdfd;"></div>
<div class="abs" style="left:367.0px;top:647.5px;width:1538.0px;height:43.6px;background:#f2f3f5;"></div>
<div class="abs" style="left:367.0px;top:691.2px;width:1538.0px;height:43.6px;background:#fcfdfd;"></div>
<div class="abs" style="left:367.0px;top:734.8px;width:1538.0px;height:43.6px;background:#f2f3f5;"></div>
<div class="abs" style="left:367.0px;top:778.5px;width:1538.0px;height:43.6px;background:#fcfdfd;"></div>
<div class="abs" style="left:367.0px;top:822.1px;width:1538.0px;height:43.6px;background:#f2f3f5;"></div>
<div class="abs" style="left:367.0px;top:865.8px;width:1538.0px;height:43.6px;background:#fcfdfd;"></div>
<div class="abs" style="left:367.0px;top:909.4px;width:1538.0px;height:43.6px;background:#f2f3f5;"></div>
<div class="abs" style="left:367.0px;top:953.1px;width:1538.0px;height:43.6px;background:#fcfdfd;"></div>
<div class="abs" style="left:367.0px;top:996.8px;width:1538.0px;height:43.6px;background:#f2f3f5;"></div>
<div class="abs" style="left:367.0px;top:1040.4px;width:1538.0px;height:43.6px;background:#fcfdfd;"></div>
<div class="abs" style="left:367.0px;top:1084.0px;width:1538.0px;height:43.6px;background:#f2f3f5;"></div>
<div class="abs" style="left:418.0px;top:342.0px;width:1.0px;height:796.0px;background:#d9dee2;"></div>
<div class="abs" style="left:468.4px;top:342.0px;width:1.0px;height:796.0px;background:#d9dee2;"></div>
<div class="abs" style="left:641.0px;top:342.0px;width:1.0px;height:796.0px;background:#d9dee2;"></div>
<div class="abs" style="left:823.0px;top:342.0px;width:1.0px;height:796.0px;background:#d9dee2;"></div>
<div class="abs" style="left:1037.0px;top:342.0px;width:1.0px;height:796.0px;background:#d9dee2;"></div>
<div class="abs" style="left:1234.0px;top:342.0px;width:1.0px;height:796.0px;background:#d9dee2;"></div>
<div class="abs" style="left:1425.0px;top:342.0px;width:1.0px;height:796.0px;background:#d9dee2;"></div>
<div class="abs" style="left:1616.0px;top:342.0px;width:1.0px;height:796.0px;background:#d9dee2;"></div>
<div class="abs" style="left:1697.0px;top:342.0px;width:1.0px;height:796.0px;background:#d9dee2;"></div>
<div class="abs" style="left:1879.0px;top:342.0px;width:1.0px;height:796.0px;background:#d9dee2;"></div>
<svg style="left:380.0px;top:351.5px" width="28" height="28" viewBox="0 0 28 28"><path d="M1 1h13l5 4v15h-18z" fill="#eef5fb" stroke="#3a86c6" stroke-width="2"/><g fill="#3a86c6"><rect x="4" y="5" width="2" height="2"/><rect x="4" y="9" width="2" height="2"/><rect x="4" y="13" width="2" height="2"/><rect x="8" y="5" width="5" height="2"/><rect x="8" y="9" width="3" height="2"/><rect x="8" y="13" width="3" height="2"/></g><circle cx="19" cy="12" r="7" fill="#d9f0fb" stroke="#7a7fa8" stroke-width="1.6"/><path d="M12 19l-6.5 7" stroke="#e89a2a" stroke-width="3.2" stroke-linecap="round"/></svg>
<div class="t" style="left:480.0px;top:348.5px;font-size:21.4px;color:#3a84b1;transform:scaleX(0.9568);-webkit-text-stroke:0.2px #3a84b1;">06/06 15:15:19</div>
<div class="t" style="left:653.0px;top:348.5px;font-size:21.4px;color:#3a84b1;transform:scaleX(0.9027);-webkit-text-stroke:0.2px #3a84b1;">end</div>
<div class="t" style="left:835.0px;top:348.5px;font-size:21.4px;color:#3a84b1;transform:scaleX(0.8980);-webkit-text-stroke:0.2px #3a84b1;">Cloudflare_L3_Zone</div>
<div class="t" style="left:1049.0px;top:348.5px;font-size:21.4px;color:#3a84b1;transform:scaleX(0.8980);-webkit-text-stroke:0.2px #3a84b1;">Cloudflare_L3_Zone</div>
<div class="t" style="left:1246.0px;top:348.5px;font-size:21.4px;color:#3a84b1;transform:scaleX(0.9232);-webkit-text-stroke:0.2px #3a84b1;">172.64.240.253</div>
<div class="t" style="left:1437.5px;top:348.5px;font-size:21.4px;color:#3a84b1;transform:scaleX(0.9190);-webkit-text-stroke:0.2px #3a84b1;">162.158.117.4</div>
<div class="t" style="left:1628.0px;top:348.5px;font-size:21.4px;color:#3a84b1;transform:scaleX(0.9140);-webkit-text-stroke:0.2px #3a84b1;">0</div>
<div class="t" style="left:1709.5px;top:348.5px;font-size:21.4px;color:#3a84b1;transform:scaleX(0.9050);-webkit-text-stroke:0.2px #3a84b1;">icmp</div>
<div class="t" style="left:1890.0px;top:348.5px;font-size:21.4px;color:#3a84b1;transform:scaleX(0.9050);-webkit-text-stroke:0.2px #3a84b1;">al</div>
<svg style="left:380.0px;top:395.1px" width="28" height="28" viewBox="0 0 28 28"><path d="M1 1h13l5 4v15h-18z" fill="#eef5fb" stroke="#3a86c6" stroke-width="2"/><g fill="#3a86c6"><rect x="4" y="5" width="2" height="2"/><rect x="4" y="9" width="2" height="2"/><rect x="4" y="13" width="2" height="2"/><rect x="8" y="5" width="5" height="2"/><rect x="8" y="9" width="3" height="2"/><rect x="8" y="13" width="3" height="2"/></g><circle cx="19" cy="12" r="7" fill="#d9f0fb" stroke="#7a7fa8" stroke-width="1.6"/><path d="M12 19l-6.5 7" stroke="#e89a2a" stroke-width="3.2" stroke-linecap="round"/></svg>
<div class="t" style="left:480.0px;top:392.1px;font-size:21.4px;color:#3a84b1;transform:scaleX(0.9568);-webkit-text-stroke:0.2px #3a84b1;">06/06 15:15:17</div>
<div class="t" style="left:653.0px;top:392.1px;font-size:21.4px;color:#3a84b1;transform:scaleX(0.9027);-webkit-text-stroke:0.2px #3a84b1;">end</div>
<div class="t" style="left:835.0px;top:392.1px;font-size:21.4px;color:#3a84b1;transform:scaleX(0.8980);-webkit-text-stroke:0.2px #3a84b1;">Cloudflare_L3_Zone</div>
<div class="t" style="left:1049.0px;top:392.1px;font-size:21.4px;color:#3a84b1;transform:scaleX(0.8980);-webkit-text-stroke:0.2px #3a84b1;">Cloudflare_L3_Zone</div>
<div class="t" style="left:1246.0px;top:392.1px;font-size:21.4px;color:#3a84b1;transform:scaleX(0.9232);-webkit-text-stroke:0.2px #3a84b1;">172.64.240.254</div>
<div class="t" style="left:1437.5px;top:392.1px;font-size:21.4px;color:#3a84b1;transform:scaleX(0.9190);-webkit-text-stroke:0.2px #3a84b1;">141.101.70.211</div>
<div class="t" style="left:1628.0px;top:392.1px;font-size:21.4px;color:#3a84b1;transform:scaleX(0.9140);-webkit-text-stroke:0.2px #3a84b1;">0</div>
<div class="t" style="left:1709.5px;top:392.1px;font-size:21.4px;color:#3a84b1;transform:scaleX(0.9050);-webkit-text-stroke:0.2px #3a84b1;">icmp</div>
<div class="t" style="left:1890.0px;top:392.1px;font-size:21.4px;color:#3a84b1;transform:scaleX(0.9050);-webkit-text-stroke:0.2px #3a84b1;">al</div>
<svg style="left:380.0px;top:438.8px" width="28" height="28" viewBox="0 0 28 28"><path d="M1 1h13l5 4v15h-18z" fill="#eef5fb" stroke="#3a86c6" stroke-width="2"/><g fill="#3a86c6"><rect x="4" y="5" width="2" height="2"/><rect x="4" y="9" width="2" height="2"/><rect x="4" y="13" width="2" height="2"/><rect x="8" y="5" width="5" height="2"/><rect x="8" y="9" width="3" height="2"/><rect x="8" y="13" width="3" height="2"/></g><circle cx="19" cy="12" r="7" fill="#d9f0fb" stroke="#7a7fa8" stroke-width="1.6"/><path d="M12 19l-6.5 7" stroke="#e89a2a" stroke-width="3.2" stroke-linecap="round"/></svg>
<div class="t" style="left:480.0px;top:435.7px;font-size:21.4px;color:#3a84b1;transform:scaleX(0.9568);-webkit-text-stroke:0.2px #3a84b1;">06/06 15:15:17</div>
<div class="t" style="left:653.0px;top:435.7px;font-size:21.4px;color:#3a84b1;transform:scaleX(0.9027);-webkit-text-stroke:0.2px #3a84b1;">end</div>
<div class="t" style="left:835.0px;top:435.7px;font-size:21.4px;color:#3a84b1;transform:scaleX(0.8980);-webkit-text-stroke:0.2px #3a84b1;">Cloudflare_L3_Zone</div>
<div class="t" style="left:1049.0px;top:435.7px;font-size:21.4px;color:#3a84b1;transform:scaleX(0.8980);-webkit-text-stroke:0.2px #3a84b1;">Cloudflare_L3_Zone</div>
<div class="t" style="left:1246.0px;top:435.7px;font-size:21.4px;color:#3a84b1;transform:scaleX(0.9232);-webkit-text-stroke:0.2px #3a84b1;">172.64.240.253</div>
<div class="t" style="left:1437.5px;top:435.7px;font-size:21.4px;color:#3a84b1;transform:scaleX(0.9190);-webkit-text-stroke:0.2px #3a84b1;">141.101.70.211</div>
<div class="t" style="left:1628.0px;top:435.7px;font-size:21.4px;color:#3a84b1;transform:scaleX(0.9140);-webkit-text-stroke:0.2px #3a84b1;">0</div>
<div class="t" style="left:1709.5px;top:435.7px;font-size:21.4px;color:#3a84b1;transform:scaleX(0.9050);-webkit-text-stroke:0.2px #3a84b1;">icmp</div>
<div class="t" style="left:1890.0px;top:435.7px;font-size:21.4px;color:#3a84b1;transform:scaleX(0.9050);-webkit-text-stroke:0.2px #3a84b1;">al</div>
<svg style="left:380.0px;top:482.4px" width="28" height="28" viewBox="0 0 28 28"><path d="M1 1h13l5 4v15h-18z" fill="#eef5fb" stroke="#3a86c6" stroke-width="2"/><g fill="#3a86c6"><rect x="4" y="5" width="2" height="2"/><rect x="4" y="9" width="2" height="2"/><rect x="4" y="13" width="2" height="2"/><rect x="8" y="5" width="5" height="2"/><rect x="8" y="9" width="3" height="2"/><rect x="8" y="13" width="3" height="2"/></g><circle cx="19" cy="12" r="7" fill="#d9f0fb" stroke="#7a7fa8" stroke-width="1.6"/><path d="M12 19l-6.5 7" stroke="#e89a2a" stroke-width="3.2" stroke-linecap="round"/></svg>
<div class="t" style="left:480.0px;top:479.3px;font-size:21.4px;color:#3a84b1;transform:scaleX(0.9568);-webkit-text-stroke:0.2px #3a84b1;">06/06 15:15:17</div>
<div class="t" style="left:653.0px;top:479.3px;font-size:21.4px;color:#3a84b1;transform:scaleX(0.9027);-webkit-text-stroke:0.2px #3a84b1;">end</div>
<div class="t" style="left:835.0px;top:479.3px;font-size:21.4px;color:#3a84b1;transform:scaleX(0.8980);-webkit-text-stroke:0.2px #3a84b1;">Cloudflare_L3_Zone</div>
<div class="t" style="left:1049.0px;top:479.3px;font-size:21.4px;color:#3a84b1;transform:scaleX(0.8980);-webkit-text-stroke:0.2px #3a84b1;">Cloudflare_L3_Zone</div>
<div class="t" style="left:1246.0px;top:479.3px;font-size:21.4px;color:#3a84b1;transform:scaleX(0.9232);-webkit-text-stroke:0.2px #3a84b1;">172.64.240.253</div>
<div class="t" style="left:1437.5px;top:479.3px;font-size:21.4px;color:#3a84b1;transform:scaleX(0.9190);-webkit-text-stroke:0.2px #3a84b1;">162.158.234.19</div>
<div class="t" style="left:1628.0px;top:479.3px;font-size:21.4px;color:#3a84b1;transform:scaleX(0.9140);-webkit-text-stroke:0.2px #3a84b1;">0</div>
<div class="t" style="left:1709.5px;top:479.3px;font-size:21.4px;color:#3a84b1;transform:scaleX(0.9050);-webkit-text-stroke:0.2px #3a84b1;">icmp</div>
<div class="t" style="left:1890.0px;top:479.3px;font-size:21.4px;color:#3a84b1;transform:scaleX(0.9050);-webkit-text-stroke:0.2px #3a84b1;">al</div>
<svg style="left:380.0px;top:526.1px" width="28" height="28" viewBox="0 0 28 28"><path d="M1 1h13l5 4v15h-18z" fill="#eef5fb" stroke="#3a86c6" stroke-width="2"/><g fill="#3a86c6"><rect x="4" y="5" width="2" height="2"/><rect x="4" y="9" width="2" height="2"/><rect x="4" y="13" width="2" height="2"/><rect x="8" y="5" width="5" height="2"/><rect x="8" y="9" width="3" height="2"/><rect x="8" y="13" width="3" height="2"/></g><circle cx="19" cy="12" r="7" fill="#d9f0fb" stroke="#7a7fa8" stroke-width="1.6"/><path d="M12 19l-6.5 7" stroke="#e89a2a" stroke-width="3.2" stroke-linecap="round"/></svg>
<div class="t" style="left:480.0px;top:522.9px;font-size:21.4px;color:#3a84b1;transform:scaleX(0.9568);-webkit-text-stroke:0.2px #3a84b1;">06/06 15:15:17</div>
<div class="t" style="left:653.0px;top:522.9px;font-size:21.4px;color:#3a84b1;transform:scaleX(0.9027);-webkit-text-stroke:0.2px #3a84b1;">end</div>
<div class="t" style="left:835.0px;top:522.9px;font-size:21.4px;color:#3a84b1;transform:scaleX(0.8980);-webkit-text-stroke:0.2px #3a84b1;">Cloudflare_L3_Zone</div>
<div class="t" style="left:1049.0px;top:522.9px;font-size:21.4px;color:#3a84b1;transform:scaleX(0.8980);-webkit-text-stroke:0.2px #3a84b1;">Cloudflare_L3_Zone</div>
<div class="t" style="left:1246.0px;top:522.9px;font-size:21.4px;color:#3a84b1;transform:scaleX(0.9232);-webkit-text-stroke:0.2px #3a84b1;">172.64.240.254</div>
<div class="t" style="left:1437.5px;top:522.9px;font-size:21.4px;color:#3a84b1;transform:scaleX(0.9190);-webkit-text-stroke:0.2px #3a84b1;">172.70.95.88</div>
<div class="t" style="left:1628.0px;top:522.9px;font-size:21.4px;color:#3a84b1;transform:scaleX(0.9140);-webkit-text-stroke:0.2px #3a84b1;">0</div>
<div class="t" style="left:1709.5px;top:522.9px;font-size:21.4px;color:#3a84b1;transform:scaleX(0.9050);-webkit-text-stroke:0.2px #3a84b1;">icmp</div>
<div class="t" style="left:1890.0px;top:522.9px;font-size:21.4px;color:#3a84b1;transform:scaleX(0.9050);-webkit-text-stroke:0.2px #3a84b1;">al</div>
<svg style="left:380.0px;top:569.8px" width="28" height="28" viewBox="0 0 28 28"><path d="M1 1h13l5 4v15h-18z" fill="#eef5fb" stroke="#3a86c6" stroke-width="2"/><g fill="#3a86c6"><rect x="4" y="5" width="2" height="2"/><rect x="4" y="9" width="2" height="2"/><rect x="4" y="13" width="2" height="2"/><rect x="8" y="5" width="5" height="2"/><rect x="8" y="9" width="3" height="2"/><rect x="8" y="13" width="3" height="2"/></g><circle cx="19" cy="12" r="7" fill="#d9f0fb" stroke="#7a7fa8" stroke-width="1.6"/><path d="M12 19l-6.5 7" stroke="#e89a2a" stroke-width="3.2" stroke-linecap="round"/></svg>
<div class="t" style="left:480.0px;top:566.5px;font-size:21.4px;color:#3a84b1;transform:scaleX(0.9568);-webkit-text-stroke:0.2px #3a84b1;">06/06 15:15:17</div>
<div class="t" style="left:653.0px;top:566.5px;font-size:21.4px;color:#3a84b1;transform:scaleX(0.9027);-webkit-text-stroke:0.2px #3a84b1;">end</div>
<div class="t" style="left:835.0px;top:566.5px;font-size:21.4px;color:#3a84b1;transform:scaleX(0.8980);-webkit-text-stroke:0.2px #3a84b1;">Cloudflare_L3_Zone</div>
<div class="t" style="left:1049.0px;top:566.5px;font-size:21.4px;color:#3a84b1;transform:scaleX(0.8980);-webkit-text-stroke:0.2px #3a84b1;">Cloudflare_L3_Zone</div>
<div class="t" style="left:1246.0px;top:566.5px;font-size:21.4px;color:#3a84b1;transform:scaleX(0.9232);-webkit-text-stroke:0.2px #3a84b1;">172.64.240.253</div>
<div class="t" style="left:1437.5px;top:566.5px;font-size:21.4px;color:#3a84b1;transform:scaleX(0.9190);-webkit-text-stroke:0.2px #3a84b1;">172.70.125.51</div>
<div class="t" style="left:1628.0px;top:566.5px;font-size:21.4px;color:#3a84b1;transform:scaleX(0.9140);-webkit-text-stroke:0.2px #3a84b1;">0</div>
<div class="t" style="left:1709.5px;top:566.5px;font-size:21.4px;color:#3a84b1;transform:scaleX(0.9050);-webkit-text-stroke:0.2px #3a84b1;">icmp</div>
<div class="t" style="left:1890.0px;top:566.5px;font-size:21.4px;color:#3a84b1;transform:scaleX(0.9050);-webkit-text-stroke:0.2px #3a84b1;">al</div>
<svg style="left:380.0px;top:613.4px" width="28" height="28" viewBox="0 0 28 28"><path d="M1 1h13l5 4v15h-18z" fill="#eef5fb" stroke="#3a86c6" stroke-width="2"/><g fill="#3a86c6"><rect x="4" y="5" width="2" height="2"/><rect x="4" y="9" width="2" height="2"/><rect x="4" y="13" width="2" height="2"/><rect x="8" y="5" width="5" height="2"/><rect x="8" y="9" width="3" height="2"/><rect x="8" y="13" width="3" height="2"/></g><circle cx="19" cy="12" r="7" fill="#d9f0fb" stroke="#7a7fa8" stroke-width="1.6"/><path d="M12 19l-6.5 7" stroke="#e89a2a" stroke-width="3.2" stroke-linecap="round"/></svg>
<div class="t" style="left:480.0px;top:610.1px;font-size:21.4px;color:#3a84b1;transform:scaleX(0.9568);-webkit-text-stroke:0.2px #3a84b1;">06/06 15:15:17</div>
<div class="t" style="left:653.0px;top:610.1px;font-size:21.4px;color:#3a84b1;transform:scaleX(0.9027);-webkit-text-stroke:0.2px #3a84b1;">end</div>
<div class="t" style="left:835.0px;top:610.1px;font-size:21.4px;color:#3a84b1;transform:scaleX(0.8980);-webkit-text-stroke:0.2px #3a84b1;">Cloudflare_L3_Zone</div>
<div class="t" style="left:1049.0px;top:610.1px;font-size:21.4px;color:#3a84b1;transform:scaleX(0.8980);-webkit-text-stroke:0.2px #3a84b1;">Cloudflare_L3_Zone</div>
<div class="t" style="left:1246.0px;top:610.1px;font-size:21.4px;color:#3a84b1;transform:scaleX(0.9232);-webkit-text-stroke:0.2px #3a84b1;">172.64.240.254</div>
<div class="t" style="left:1437.5px;top:610.1px;font-size:21.4px;color:#3a84b1;transform:scaleX(0.9190);-webkit-text-stroke:0.2px #3a84b1;">162.158.157.149</div>
<div class="t" style="left:1628.0px;top:610.1px;font-size:21.4px;color:#3a84b1;transform:scaleX(0.9140);-webkit-text-stroke:0.2px #3a84b1;">0</div>
<div class="t" style="left:1709.5px;top:610.1px;font-size:21.4px;color:#3a84b1;transform:scaleX(0.9050);-webkit-text-stroke:0.2px #3a84b1;">icmp</div>
<div class="t" style="left:1890.0px;top:610.1px;font-size:21.4px;color:#3a84b1;transform:scaleX(0.9050);-webkit-text-stroke:0.2px #3a84b1;">al</div>
<svg style="left:380.0px;top:657.0px" width="28" height="28" viewBox="0 0 28 28"><path d="M1 1h13l5 4v15h-18z" fill="#eef5fb" stroke="#3a86c6" stroke-width="2"/><g fill="#3a86c6"><rect x="4" y="5" width="2" height="2"/><rect x="4" y="9" width="2" height="2"/><rect x="4" y="13" width="2" height="2"/><rect x="8" y="5" width="5" height="2"/><rect x="8" y="9" width="3" height="2"/><rect x="8" y="13" width="3" height="2"/></g><circle cx="19" cy="12" r="7" fill="#d9f0fb" stroke="#7a7fa8" stroke-width="1.6"/><path d="M12 19l-6.5 7" stroke="#e89a2a" stroke-width="3.2" stroke-linecap="round"/></svg>
<div class="t" style="left:480.0px;top:653.7px;font-size:21.4px;color:#3a84b1;transform:scaleX(0.9568);-webkit-text-stroke:0.2px #3a84b1;">06/06 15:15:17</div>
<div class="t" style="left:653.0px;top:653.7px;font-size:21.4px;color:#3a84b1;transform:scaleX(0.9027);-webkit-text-stroke:0.2px #3a84b1;">end</div>
<div class="t" style="left:835.0px;top:653.7px;font-size:21.4px;color:#3a84b1;transform:scaleX(0.8980);-webkit-text-stroke:0.2px #3a84b1;">Cloudflare_L3_Zone</div>
<div class="t" style="left:1049.0px;top:653.7px;font-size:21.4px;color:#3a84b1;transform:scaleX(0.8980);-webkit-text-stroke:0.2px #3a84b1;">Cloudflare_L3_Zone</div>
<div class="t" style="left:1246.0px;top:653.7px;font-size:21.4px;color:#3a84b1;transform:scaleX(0.9232);-webkit-text-stroke:0.2px #3a84b1;">172.64.240.253</div>
<div class="t" style="left:1437.5px;top:653.7px;font-size:21.4px;color:#3a84b1;transform:scaleX(0.9190);-webkit-text-stroke:0.2px #3a84b1;">162.158.157.149</div>
<div class="t" style="left:1628.0px;top:653.7px;font-size:21.4px;color:#3a84b1;transform:scaleX(0.9140);-webkit-text-stroke:0.2px #3a84b1;">0</div>
<div class="t" style="left:1709.5px;top:653.7px;font-size:21.4px;color:#3a84b1;transform:scaleX(0.9050);-webkit-text-stroke:0.2px #3a84b1;">icmp</div>
<div class="t" style="left:1890.0px;top:653.7px;font-size:21.4px;color:#3a84b1;transform:scaleX(0.9050);-webkit-text-stroke:0.2px #3a84b1;">al</div>
<svg style="left:380.0px;top:700.7px" width="28" height="28" viewBox="0 0 28 28"><path d="M1 1h13l5 4v15h-18z" fill="#eef5fb" stroke="#3a86c6" stroke-width="2"/><g fill="#3a86c6"><rect x="4" y="5" width="2" height="2"/><rect x="4" y="9" width="2" height="2"/><rect x="4" y="13" width="2" height="2"/><rect x="8" y="5" width="5" height="2"/><rect x="8" y="9" width="3" height="2"/><rect x="8" y="13" width="3" height="2"/></g><circle cx="19" cy="12" r="7" fill="#d9f0fb" stroke="#7a7fa8" stroke-width="1.6"/><path d="M12 19l-6.5 7" stroke="#e89a2a" stroke-width="3.2" stroke-linecap="round"/></svg>
<div class="t" style="left:480.0px;top:697.3px;font-size:21.4px;color:#3a84b1;transform:scaleX(0.9568);-webkit-text-stroke:0.2px #3a84b1;">06/06 15:15:16</div>
<div class="t" style="left:653.0px;top:697.3px;font-size:21.4px;color:#3a84b1;transform:scaleX(0.9027);-webkit-text-stroke:0.2px #3a84b1;">end</div>
<div class="t" style="left:835.0px;top:697.3px;font-size:21.4px;color:#3a84b1;transform:scaleX(0.8980);-webkit-text-stroke:0.2px #3a84b1;">Cloudflare_L3_Zone</div>
<div class="t" style="left:1049.0px;top:697.3px;font-size:21.4px;color:#3a84b1;transform:scaleX(0.8980);-webkit-text-stroke:0.2px #3a84b1;">Cloudflare_L3_Zone</div>
<div class="t" style="left:1246.0px;top:697.3px;font-size:21.4px;color:#3a84b1;transform:scaleX(0.9232);-webkit-text-stroke:0.2px #3a84b1;">172.64.240.254</div>
<div class="t" style="left:1437.5px;top:697.3px;font-size:21.4px;color:#3a84b1;transform:scaleX(0.9190);-webkit-text-stroke:0.2px #3a84b1;">172.71.181.76</div>
<div class="t" style="left:1628.0px;top:697.3px;font-size:21.4px;color:#3a84b1;transform:scaleX(0.9140);-webkit-text-stroke:0.2px #3a84b1;">0</div>
<div class="t" style="left:1709.5px;top:697.3px;font-size:21.4px;color:#3a84b1;transform:scaleX(0.9050);-webkit-text-stroke:0.2px #3a84b1;">icmp</div>
<div class="t" style="left:1890.0px;top:697.3px;font-size:21.4px;color:#3a84b1;transform:scaleX(0.9050);-webkit-text-stroke:0.2px #3a84b1;">al</div>
<svg style="left:380.0px;top:744.3px" width="28" height="28" viewBox="0 0 28 28"><path d="M1 1h13l5 4v15h-18z" fill="#eef5fb" stroke="#3a86c6" stroke-width="2"/><g fill="#3a86c6"><rect x="4" y="5" width="2" height="2"/><rect x="4" y="9" width="2" height="2"/><rect x="4" y="13" width="2" height="2"/><rect x="8" y="5" width="5" height="2"/><rect x="8" y="9" width="3" height="2"/><rect x="8" y="13" width="3" height="2"/></g><circle cx="19" cy="12" r="7" fill="#d9f0fb" stroke="#7a7fa8" stroke-width="1.6"/><path d="M12 19l-6.5 7" stroke="#e89a2a" stroke-width="3.2" stroke-linecap="round"/></svg>
<div class="t" style="left:480.0px;top:740.9px;font-size:21.4px;color:#3a84b1;transform:scaleX(0.9568);-webkit-text-stroke:0.2px #3a84b1;">06/06 15:15:16</div>
<div class="t" style="left:653.0px;top:740.9px;font-size:21.4px;color:#3a84b1;transform:scaleX(0.9027);-webkit-text-stroke:0.2px #3a84b1;">end</div>
<div class="t" style="left:835.0px;top:740.9px;font-size:21.4px;color:#3a84b1;transform:scaleX(0.8980);-webkit-text-stroke:0.2px #3a84b1;">Cloudflare_L3_Zone</div>
<div class="t" style="left:1049.0px;top:740.9px;font-size:21.4px;color:#3a84b1;transform:scaleX(0.8980);-webkit-text-stroke:0.2px #3a84b1;">Cloudflare_L3_Zone</div>
<div class="t" style="left:1246.0px;top:740.9px;font-size:21.4px;color:#3a84b1;transform:scaleX(0.9232);-webkit-text-stroke:0.2px #3a84b1;">172.64.240.253</div>
<div class="t" style="left:1437.5px;top:740.9px;font-size:21.4px;color:#3a84b1;transform:scaleX(0.9190);-webkit-text-stroke:0.2px #3a84b1;">172.71.181.76</div>
<div class="t" style="left:1628.0px;top:740.9px;font-size:21.4px;color:#3a84b1;transform:scaleX(0.9140);-webkit-text-stroke:0.2px #3a84b1;">0</div>
<div class="t" style="left:1709.5px;top:740.9px;font-size:21.4px;color:#3a84b1;transform:scaleX(0.9050);-webkit-text-stroke:0.2px #3a84b1;">icmp</div>
<div class="t" style="left:1890.0px;top:740.9px;font-size:21.4px;color:#3a84b1;transform:scaleX(0.9050);-webkit-text-stroke:0.2px #3a84b1;">al</div>
<svg style="left:380.0px;top:788.0px" width="28" height="28" viewBox="0 0 28 28"><path d="M1 1h13l5 4v15h-18z" fill="#eef5fb" stroke="#3a86c6" stroke-width="2"/><g fill="#3a86c6"><rect x="4" y="5" width="2" height="2"/><rect x="4" y="9" width="2" height="2"/><rect x="4" y="13" width="2" height="2"/><rect x="8" y="5" width="5" height="2"/><rect x="8" y="9" width="3" height="2"/><rect x="8" y="13" width="3" height="2"/></g><circle cx="19" cy="12" r="7" fill="#d9f0fb" stroke="#7a7fa8" stroke-width="1.6"/><path d="M12 19l-6.5 7" stroke="#e89a2a" stroke-width="3.2" stroke-linecap="round"/></svg>
<div class="t" style="left:480.0px;top:784.5px;font-size:21.4px;color:#3a84b1;transform:scaleX(0.9568);-webkit-text-stroke:0.2px #3a84b1;">06/06 15:15:16</div>
<div class="t" style="left:653.0px;top:784.5px;font-size:21.4px;color:#3a84b1;transform:scaleX(0.9027);-webkit-text-stroke:0.2px #3a84b1;">end</div>
<div class="t" style="left:835.0px;top:784.5px;font-size:21.4px;color:#3a84b1;transform:scaleX(0.8980);-webkit-text-stroke:0.2px #3a84b1;">Cloudflare_L3_Zone</div>
<div class="t" style="left:1049.0px;top:784.5px;font-size:21.4px;color:#3a84b1;transform:scaleX(0.8980);-webkit-text-stroke:0.2px #3a84b1;">Cloudflare_L3_Zone</div>
<div class="t" style="left:1246.0px;top:784.5px;font-size:21.4px;color:#3a84b1;transform:scaleX(0.9232);-webkit-text-stroke:0.2px #3a84b1;">172.64.240.254</div>
<div class="t" style="left:1437.5px;top:784.5px;font-size:21.4px;color:#3a84b1;transform:scaleX(0.9190);-webkit-text-stroke:0.2px #3a84b1;">172.71.253.23</div>
<div class="t" style="left:1628.0px;top:784.5px;font-size:21.4px;color:#3a84b1;transform:scaleX(0.9140);-webkit-text-stroke:0.2px #3a84b1;">0</div>
<div class="t" style="left:1709.5px;top:784.5px;font-size:21.4px;color:#3a84b1;transform:scaleX(0.9050);-webkit-text-stroke:0.2px #3a84b1;">icmp</div>
<div class="t" style="left:1890.0px;top:784.5px;font-size:21.4px;color:#3a84b1;transform:scaleX(0.9050);-webkit-text-stroke:0.2px #3a84b1;">al</div>
<svg style="left:380.0px;top:831.6px" width="28" height="28" viewBox="0 0 28 28"><path d="M1 1h13l5 4v15h-18z" fill="#eef5fb" stroke="#3a86c6" stroke-width="2"/><g fill="#3a86c6"><rect x="4" y="5" width="2" height="2"/><rect x="4" y="9" width="2" height="2"/><rect x="4" y="13" width="2" height="2"/><rect x="8" y="5" width="5" height="2"/><rect x="8" y="9" width="3" height="2"/><rect x="8" y="13" width="3" height="2"/></g><circle cx="19" cy="12" r="7" fill="#d9f0fb" stroke="#7a7fa8" stroke-width="1.6"/><path d="M12 19l-6.5 7" stroke="#e89a2a" stroke-width="3.2" stroke-linecap="round"/></svg>
<div class="t" style="left:480.0px;top:828.1px;font-size:21.4px;color:#3a84b1;transform:scaleX(0.9568);-webkit-text-stroke:0.2px #3a84b1;">06/06 15:15:16</div>
<div class="t" style="left:653.0px;top:828.1px;font-size:21.4px;color:#3a84b1;transform:scaleX(0.9027);-webkit-text-stroke:0.2px #3a84b1;">end</div>
<div class="t" style="left:835.0px;top:828.1px;font-size:21.4px;color:#3a84b1;transform:scaleX(0.8980);-webkit-text-stroke:0.2px #3a84b1;">Cloudflare_L3_Zone</div>
<div class="t" style="left:1049.0px;top:828.1px;font-size:21.4px;color:#3a84b1;transform:scaleX(0.8980);-webkit-text-stroke:0.2px #3a84b1;">Cloudflare_L3_Zone</div>
<div class="t" style="left:1246.0px;top:828.1px;font-size:21.4px;color:#3a84b1;transform:scaleX(0.9232);-webkit-text-stroke:0.2px #3a84b1;">172.64.240.253</div>
<div class="t" style="left:1437.5px;top:828.1px;font-size:21.4px;color:#3a84b1;transform:scaleX(0.9190);-webkit-text-stroke:0.2px #3a84b1;">172.71.253.23</div>
<div class="t" style="left:1628.0px;top:828.1px;font-size:21.4px;color:#3a84b1;transform:scaleX(0.9140);-webkit-text-stroke:0.2px #3a84b1;">0</div>
<div class="t" style="left:1709.5px;top:828.1px;font-size:21.4px;color:#3a84b1;transform:scaleX(0.9050);-webkit-text-stroke:0.2px #3a84b1;">icmp</div>
<div class="t" style="left:1890.0px;top:828.1px;font-size:21.4px;color:#3a84b1;transform:scaleX(0.9050);-webkit-text-stroke:0.2px #3a84b1;">al</div>
<svg style="left:380.0px;top:875.3px" width="28" height="28" viewBox="0 0 28 28"><path d="M1 1h13l5 4v15h-18z" fill="#eef5fb" stroke="#3a86c6" stroke-width="2"/><g fill="#3a86c6"><rect x="4" y="5" width="2" height="2"/><rect x="4" y="9" width="2" height="2"/><rect x="4" y="13" width="2" height="2"/><rect x="8" y="5" width="5" height="2"/><rect x="8" y="9" width="3" height="2"/><rect x="8" y="13" width="3" height="2"/></g><circle cx="19" cy="12" r="7" fill="#d9f0fb" stroke="#7a7fa8" stroke-width="1.6"/><path d="M12 19l-6.5 7" stroke="#e89a2a" stroke-width="3.2" stroke-linecap="round"/></svg>
<div class="t" style="left:480.0px;top:871.7px;font-size:21.4px;color:#3a84b1;transform:scaleX(0.9568);-webkit-text-stroke:0.2px #3a84b1;">06/06 15:15:15</div>
<div class="t" style="left:653.0px;top:871.7px;font-size:21.4px;color:#3a84b1;transform:scaleX(0.9027);-webkit-text-stroke:0.2px #3a84b1;">end</div>
<div class="t" style="left:835.0px;top:871.7px;font-size:21.4px;color:#3a84b1;transform:scaleX(0.8980);-webkit-text-stroke:0.2px #3a84b1;">Cloudflare_L3_Zone</div>
<div class="t" style="left:1049.0px;top:871.7px;font-size:21.4px;color:#3a84b1;transform:scaleX(0.8980);-webkit-text-stroke:0.2px #3a84b1;">Cloudflare_L3_Zone</div>
<div class="t" style="left:1246.0px;top:871.7px;font-size:21.4px;color:#3a84b1;transform:scaleX(0.9232);-webkit-text-stroke:0.2px #3a84b1;">172.64.240.253</div>
<div class="t" style="left:1437.5px;top:871.7px;font-size:21.4px;color:#3a84b1;transform:scaleX(0.9190);-webkit-text-stroke:0.2px #3a84b1;">108.162.217.182</div>
<div class="t" style="left:1628.0px;top:871.7px;font-size:21.4px;color:#3a84b1;transform:scaleX(0.9140);-webkit-text-stroke:0.2px #3a84b1;">0</div>
<div class="t" style="left:1709.5px;top:871.7px;font-size:21.4px;color:#3a84b1;transform:scaleX(0.9050);-webkit-text-stroke:0.2px #3a84b1;">icmp</div>
<div class="t" style="left:1890.0px;top:871.7px;font-size:21.4px;color:#3a84b1;transform:scaleX(0.9050);-webkit-text-stroke:0.2px #3a84b1;">al</div>
<svg style="left:380.0px;top:918.9px" width="28" height="28" viewBox="0 0 28 28"><path d="M1 1h13l5 4v15h-18z" fill="#eef5fb" stroke="#3a86c6" stroke-width="2"/><g fill="#3a86c6"><rect x="4" y="5" width="2" height="2"/><rect x="4" y="9" width="2" height="2"/><rect x="4" y="13" width="2" height="2"/><rect x="8" y="5" width="5" height="2"/><rect x="8" y="9" width="3" height="2"/><rect x="8" y="13" width="3" height="2"/></g><circle cx="19" cy="12" r="7" fill="#d9f0fb" stroke="#7a7fa8" stroke-width="1.6"/><path d="M12 19l-6.5 7" stroke="#e89a2a" stroke-width="3.2" stroke-linecap="round"/></svg>
<div class="t" style="left:480.0px;top:915.3px;font-size:21.4px;color:#3a84b1;transform:scaleX(0.9568);-webkit-text-stroke:0.2px #3a84b1;">06/06 15:15:15</div>
<div class="t" style="left:653.0px;top:915.3px;font-size:21.4px;color:#3a84b1;transform:scaleX(0.9027);-webkit-text-stroke:0.2px #3a84b1;">end</div>
<div class="t" style="left:835.0px;top:915.3px;font-size:21.4px;color:#3a84b1;transform:scaleX(0.8980);-webkit-text-stroke:0.2px #3a84b1;">Cloudflare_L3_Zone</div>
<div class="t" style="left:1049.0px;top:915.3px;font-size:21.4px;color:#3a84b1;transform:scaleX(0.8980);-webkit-text-stroke:0.2px #3a84b1;">Cloudflare_L3_Zone</div>
<div class="t" style="left:1246.0px;top:915.3px;font-size:21.4px;color:#3a84b1;transform:scaleX(0.9232);-webkit-text-stroke:0.2px #3a84b1;">172.64.240.254</div>
<div class="t" style="left:1437.5px;top:915.3px;font-size:21.4px;color:#3a84b1;transform:scaleX(0.9190);-webkit-text-stroke:0.2px #3a84b1;">108.162.217.182</div>
<div class="t" style="left:1628.0px;top:915.3px;font-size:21.4px;color:#3a84b1;transform:scaleX(0.9140);-webkit-text-stroke:0.2px #3a84b1;">0</div>
<div class="t" style="left:1709.5px;top:915.3px;font-size:21.4px;color:#3a84b1;transform:scaleX(0.9050);-webkit-text-stroke:0.2px #3a84b1;">icmp</div>
<div class="t" style="left:1890.0px;top:915.3px;font-size:21.4px;color:#3a84b1;transform:scaleX(0.9050);-webkit-text-stroke:0.2px #3a84b1;">al</div>
<svg style="left:380.0px;top:962.6px" width="28" height="28" viewBox="0 0 28 28"><path d="M1 1h13l5 4v15h-18z" fill="#eef5fb" stroke="#3a86c6" stroke-width="2"/><g fill="#3a86c6"><rect x="4" y="5" width="2" height="2"/><rect x="4" y="9" width="2" height="2"/><rect x="4" y="13" width="2" height="2"/><rect x="8" y="5" width="5" height="2"/><rect x="8" y="9" width="3" height="2"/><rect x="8" y="13" width="3" height="2"/></g><circle cx="19" cy="12" r="7" fill="#d9f0fb" stroke="#7a7fa8" stroke-width="1.6"/><path d="M12 19l-6.5 7" stroke="#e89a2a" stroke-width="3.2" stroke-linecap="round"/></svg>
<div class="t" style="left:480.0px;top:958.9px;font-size:21.4px;color:#3a84b1;transform:scaleX(0.9568);-webkit-text-stroke:0.2px #3a84b1;">06/06 15:15:14</div>
<div class="t" style="left:653.0px;top:958.9px;font-size:21.4px;color:#3a84b1;transform:scaleX(0.9027);-webkit-text-stroke:0.2px #3a84b1;">end</div>
<div class="t" style="left:835.0px;top:958.9px;font-size:21.4px;color:#3a84b1;transform:scaleX(0.8980);-webkit-text-stroke:0.2px #3a84b1;">Cloudflare_L3_Zone</div>
<div class="t" style="left:1049.0px;top:958.9px;font-size:21.4px;color:#3a84b1;transform:scaleX(0.8980);-webkit-text-stroke:0.2px #3a84b1;">Cloudflare_L3_Zone</div>
<div class="t" style="left:1246.0px;top:958.9px;font-size:21.4px;color:#3a84b1;transform:scaleX(0.9232);-webkit-text-stroke:0.2px #3a84b1;">172.64.240.253</div>
<div class="t" style="left:1437.5px;top:958.9px;font-size:21.4px;color:#3a84b1;transform:scaleX(0.9190);-webkit-text-stroke:0.2px #3a84b1;">172.71.153.150</div>
<div class="t" style="left:1628.0px;top:958.9px;font-size:21.4px;color:#3a84b1;transform:scaleX(0.9140);-webkit-text-stroke:0.2px #3a84b1;">0</div>
<div class="t" style="left:1709.5px;top:958.9px;font-size:21.4px;color:#3a84b1;transform:scaleX(0.9050);-webkit-text-stroke:0.2px #3a84b1;">icmp</div>
<div class="t" style="left:1890.0px;top:958.9px;font-size:21.4px;color:#3a84b1;transform:scaleX(0.9050);-webkit-text-stroke:0.2px #3a84b1;">al</div>
<svg style="left:380.0px;top:1006.2px" width="28" height="28" viewBox="0 0 28 28"><path d="M1 1h13l5 4v15h-18z" fill="#eef5fb" stroke="#3a86c6" stroke-width="2"/><g fill="#3a86c6"><rect x="4" y="5" width="2" height="2"/><rect x="4" y="9" width="2" height="2"/><rect x="4" y="13" width="2" height="2"/><rect x="8" y="5" width="5" height="2"/><rect x="8" y="9" width="3" height="2"/><rect x="8" y="13" width="3" height="2"/></g><circle cx="19" cy="12" r="7" fill="#d9f0fb" stroke="#7a7fa8" stroke-width="1.6"/><path d="M12 19l-6.5 7" stroke="#e89a2a" stroke-width="3.2" stroke-linecap="round"/></svg>
<div class="t" style="left:480.0px;top:1002.5px;font-size:21.4px;color:#3a84b1;transform:scaleX(0.9568);-webkit-text-stroke:0.2px #3a84b1;">06/06 15:15:14</div>
<div class="t" style="left:653.0px;top:1002.5px;font-size:21.4px;color:#3a84b1;transform:scaleX(0.9027);-webkit-text-stroke:0.2px #3a84b1;">end</div>
<div class="t" style="left:835.0px;top:1002.5px;font-size:21.4px;color:#3a84b1;transform:scaleX(0.8980);-webkit-text-stroke:0.2px #3a84b1;">Cloudflare_L3_Zone</div>
<div class="t" style="left:1049.0px;top:1002.5px;font-size:21.4px;color:#3a84b1;transform:scaleX(0.8980);-webkit-text-stroke:0.2px #3a84b1;">Cloudflare_L3_Zone</div>
<div class="t" style="left:1246.0px;top:1002.5px;font-size:21.4px;color:#3a84b1;transform:scaleX(0.9232);-webkit-text-stroke:0.2px #3a84b1;">172.64.240.253</div>
<div class="t" style="left:1437.5px;top:1002.5px;font-size:21.4px;color:#3a84b1;transform:scaleX(0.9190);text-decoration:underline;-webkit-text-stroke:0.2px #3a84b1;">172.70.177.42</div>
<div class="t" style="left:1628.0px;top:1002.5px;font-size:21.4px;color:#3a84b1;transform:scaleX(0.9140);-webkit-text-stroke:0.2px #3a84b1;">0</div>
<div class="t" style="left:1709.5px;top:1002.5px;font-size:21.4px;color:#3a84b1;transform:scaleX(0.9050);-webkit-text-stroke:0.2px #3a84b1;">icmp</div>
<div class="t" style="left:1890.0px;top:1002.5px;font-size:21.4px;color:#3a84b1;transform:scaleX(0.9050);-webkit-text-stroke:0.2px #3a84b1;">al</div>
<svg style="left:380.0px;top:1049.9px" width="28" height="28" viewBox="0 0 28 28"><path d="M1 1h13l5 4v15h-18z" fill="#eef5fb" stroke="#3a86c6" stroke-width="2"/><g fill="#3a86c6"><rect x="4" y="5" width="2" height="2"/><rect x="4" y="9" width="2" height="2"/><rect x="4" y="13" width="2" height="2"/><rect x="8" y="5" width="5" height="2"/><rect x="8" y="9" width="3" height="2"/><rect x="8" y="13" width="3" height="2"/></g><circle cx="19" cy="12" r="7" fill="#d9f0fb" stroke="#7a7fa8" stroke-width="1.6"/><path d="M12 19l-6.5 7" stroke="#e89a2a" stroke-width="3.2" stroke-linecap="round"/></svg>
<div class="t" style="left:480.0px;top:1046.1px;font-size:21.4px;color:#3a84b1;transform:scaleX(0.9568);-webkit-text-stroke:0.2px #3a84b1;">06/06 15:15:14</div>
<div class="t" style="left:653.0px;top:1046.1px;font-size:21.4px;color:#3a84b1;transform:scaleX(0.9027);-webkit-text-stroke:0.2px #3a84b1;">end</div>
<div class="t" style="left:835.0px;top:1046.1px;font-size:21.4px;color:#3a84b1;transform:scaleX(0.8980);-webkit-text-stroke:0.2px #3a84b1;">Cloudflare_L3_Zone</div>
<div class="t" style="left:1049.0px;top:1046.1px;font-size:21.4px;color:#3a84b1;transform:scaleX(0.8980);-webkit-text-stroke:0.2px #3a84b1;">Cloudflare_L3_Zone</div>
<div class="t" style="left:1246.0px;top:1046.1px;font-size:21.4px;color:#3a84b1;transform:scaleX(0.9232);-webkit-text-stroke:0.2px #3a84b1;">172.64.240.253</div>
<div class="t" style="left:1437.5px;top:1046.1px;font-size:21.4px;color:#3a84b1;transform:scaleX(0.9190);-webkit-text-stroke:0.2px #3a84b1;">141.101.93.76</div>
<div class="t" style="left:1628.0px;top:1046.1px;font-size:21.4px;color:#3a84b1;transform:scaleX(0.9140);-webkit-text-stroke:0.2px #3a84b1;">0</div>
<div class="t" style="left:1709.5px;top:1046.1px;font-size:21.4px;color:#3a84b1;transform:scaleX(0.9050);-webkit-text-stroke:0.2px #3a84b1;">icmp</div>
<div class="t" style="left:1890.0px;top:1046.1px;font-size:21.4px;color:#3a84b1;transform:scaleX(0.9050);-webkit-text-stroke:0.2px #3a84b1;">al</div>
<svg style="left:380.0px;top:1093.5px" width="28" height="28" viewBox="0 0 28 28"><path d="M1 1h13l5 4v15h-18z" fill="#eef5fb" stroke="#3a86c6" stroke-width="2"/><g fill="#3a86c6"><rect x="4" y="5" width="2" height="2"/><rect x="4" y="9" width="2" height="2"/><rect x="4" y="13" width="2" height="2"/><rect x="8" y="5" width="5" height="2"/><rect x="8" y="9" width="3" height="2"/><rect x="8" y="13" width="3" height="2"/></g><circle cx="19" cy="12" r="7" fill="#d9f0fb" stroke="#7a7fa8" stroke-width="1.6"/><path d="M12 19l-6.5 7" stroke="#e89a2a" stroke-width="3.2" stroke-linecap="round"/></svg>
<div class="t" style="left:480.0px;top:1089.7px;font-size:21.4px;color:#3a84b1;transform:scaleX(0.9568);-webkit-text-stroke:0.2px #3a84b1;">06/06 15:15:14</div>
<div class="t" style="left:653.0px;top:1089.7px;font-size:21.4px;color:#3a84b1;transform:scaleX(0.9027);-webkit-text-stroke:0.2px #3a84b1;">end</div>
<div class="t" style="left:835.0px;top:1089.7px;font-size:21.4px;color:#3a84b1;transform:scaleX(0.8980);-webkit-text-stroke:0.2px #3a84b1;">Cloudflare_L3_Zone</div>
<div class="t" style="left:1049.0px;top:1089.7px;font-size:21.4px;color:#3a84b1;transform:scaleX(0.8980);-webkit-text-stroke:0.2px #3a84b1;">Cloudflare_L3_Zone</div>
<div class="t" style="left:1246.0px;top:1089.7px;font-size:21.4px;color:#3a84b1;transform:scaleX(0.9232);-webkit-text-stroke:0.2px #3a84b1;">172.64.240.254</div>
<div class="t" style="left:1437.5px;top:1089.7px;font-size:21.4px;color:#3a84b1;transform:scaleX(0.9190);-webkit-text-stroke:0.2px #3a84b1;">141.101.93.76</div>
<div class="t" style="left:1628.0px;top:1089.7px;font-size:21.4px;color:#3a84b1;transform:scaleX(0.9140);-webkit-text-stroke:0.2px #3a84b1;">0</div>
<div class="t" style="left:1709.5px;top:1089.7px;font-size:21.4px;color:#3a84b1;transform:scaleX(0.9050);-webkit-text-stroke:0.2px #3a84b1;">icmp</div>
<div class="t" style="left:1890.0px;top:1089.7px;font-size:21.4px;color:#3a84b1;transform:scaleX(0.9050);-webkit-text-stroke:0.2px #3a84b1;">al</div>
<div class="abs" style="left:367.0px;top:1127.7px;width:1538.0px;height:10.3px;background:#fcfdfd;"></div>
<div class="abs" style="left:418.0px;top:1127.7px;width:1.0px;height:10.3px;background:#d9dee2;"></div>
<div class="abs" style="left:468.4px;top:1127.7px;width:1.0px;height:10.3px;background:#d9dee2;"></div>
<div class="abs" style="left:641.0px;top:1127.7px;width:1.0px;height:10.3px;background:#d9dee2;"></div>
<div class="abs" style="left:823.0px;top:1127.7px;width:1.0px;height:10.3px;background:#d9dee2;"></div>
<div class="abs" style="left:1037.0px;top:1127.7px;width:1.0px;height:10.3px;background:#d9dee2;"></div>
<div class="abs" style="left:1234.0px;top:1127.7px;width:1.0px;height:10.3px;background:#d9dee2;"></div>
<div class="abs" style="left:1425.0px;top:1127.7px;width:1.0px;height:10.3px;background:#d9dee2;"></div>
<div class="abs" style="left:1616.0px;top:1127.7px;width:1.0px;height:10.3px;background:#d9dee2;"></div>
<div class="abs" style="left:1697.0px;top:1127.7px;width:1.0px;height:10.3px;background:#d9dee2;"></div>
<div class="abs" style="left:1879.0px;top:1127.7px;width:1.0px;height:10.3px;background:#d9dee2;"></div>
<div class="abs" style="left:382.0px;top:1136.0px;width:20.0px;height:2.0px;background:#8fc0e0;"></div>
<div class="abs" style="left:385.0px;top:1129.0px;width:645.0px;height:3.5px;background:#808080;border-radius:2px;"></div>
<div class="abs" style="left:364.0px;top:664.0px;width:9.0px;height:62.0px;background:#e9ecee;border-radius:0 4px 4px 0;border:1px solid #d3d8db;border-left:none;"></div>
<svg style="left:366.0px;top:691.0px" width="6" height="8" viewBox="0 0 6 8"><path d="M6 0v8l-6-4z" fill="#8b959b"/></svg>
<div class="abs" style="left:367.0px;top:1138.0px;width:1538.0px;height:48.0px;background:#44515a;"></div>
<div class="abs" style="left:0.0px;top:1185.0px;width:1905.0px;height:1.0px;background:#2e6f92;"></div>
<svg style="left:377.0px;top:1151.0px" width="26" height="19" viewBox="0 0 26 19"><rect x="0" y="1" width="2" height="17" fill="#5b666e"/><path d="M12 1v17l-10-8.5z" fill="#76818a"/><path d="M24 1v17l-10-8.5z" fill="#76818a"/></svg>
<svg style="left:420.0px;top:1151.0px" width="12" height="19" viewBox="0 0 12 19"><path d="M11 1v17l-10-8.5z" fill="#76818a"/></svg>
<div class="abs" style="left:454.0px;top:1147.0px;width:2.0px;height:29.0px;background:#8c969b;"></div>
<div class="t" style="left:465.8px;top:1151.8px;font-size:22.5px;color:#f2b21a;transform:scaleX(0.8800);">1</div>
<div class="t" style="left:480.3px;top:1151.8px;font-size:22.5px;color:#9ec83a;transform:scaleX(0.8800);">2</div>
<div class="t" style="left:495.5px;top:1151.8px;font-size:22.5px;color:#9ec83a;transform:scaleX(0.8800);">3</div>
<div class="t" style="left:510.2px;top:1151.8px;font-size:22.5px;color:#9ec83a;transform:scaleX(0.8800);">4</div>
<div class="t" style="left:526.5px;top:1151.8px;font-size:22.5px;color:#9ec83a;transform:scaleX(0.8800);">5</div>
<div class="t" style="left:541.2px;top:1151.8px;font-size:22.5px;color:#9ec83a;transform:scaleX(0.8800);">6</div>
<div class="t" style="left:556.8px;top:1151.8px;font-size:22.5px;color:#9ec83a;transform:scaleX(0.8800);">7</div>
<div class="t" style="left:571.6px;top:1151.8px;font-size:22.5px;color:#9ec83a;transform:scaleX(0.8800);">8</div>
<div class="t" style="left:587.8px;top:1151.8px;font-size:22.5px;color:#9ec83a;transform:scaleX(0.8800);">9</div>
<div class="t" style="left:603.7px;top:1151.8px;font-size:22.5px;color:#9ec83a;transform:scaleX(0.8800);">10</div>
<div class="abs" style="left:642.0px;top:1147.0px;width:2.0px;height:29.0px;background:#8c969b;"></div>
<svg style="left:666.0px;top:1152.0px" width="12" height="17" viewBox="0 0 12 17"><path d="M1 0v17l10.5-8.5z" fill="#f2f2f2" stroke="#7a8a2a" stroke-width="0.6"/></svg>
<svg style="left:703.0px;top:1152.0px" width="21" height="17" viewBox="0 0 21 17"><path d="M1 0v17l9-8.5z" fill="#f2f2f2"/><path d="M11 0v17l9-8.5z" fill="#f2f2f2"/></svg>
<div class="abs" style="left:734.0px;top:1147.0px;width:2.0px;height:29.0px;background:#8a949a;"></div>
<div class="abs" style="left:744.0px;top:1148.0px;width:25.0px;height:25.0px;background:#fff;border:1px solid #9aa3a8;border-radius:2px;"></div>
<div class="t" style="left:780.6px;top:1151.6px;font-size:22px;color:#e4eaee;transform:scaleX(0.7881);">Resolve hostname</div>
<div class="abs" style="left:950.0px;top:1148.0px;width:25.0px;height:25.0px;background:#fff;border:1px solid #9aa3a8;border-radius:2px;"></div>
<svg style="left:950.0px;top:1144.0px" width="28" height="28" viewBox="0 0 28 28"><path d="M5 14l6 7l13-17" fill="none" stroke="#2f6e99" stroke-width="3.6"/></svg>
<div class="t" style="left:986.0px;top:1151.6px;font-size:22px;color:#e4eaee;transform:scaleX(0.8077);">Highlight Policy Actions</div>
<div class="abs" style="left:1183.0px;top:1147.0px;width:2.0px;height:29.0px;background:#8a949a;"></div>
<div class="t" style="left:1201.6px;top:1149.1px;font-size:22px;color:#e4eaee;transform:scaleX(0.8004);">Test Policy Match</div>
<svg style="left:1347.6px;top:1159.0px" width="11" height="7" viewBox="0 0 11 7"><path d="M0 0h11l-5.5 7z" fill="#e4eaee"/></svg>
<div class="t" style="left:1432.2px;top:1152.0px;font-size:22px;color:#e4eaee;transform:scaleX(0.7988);">Displaying logs 1 - 30</div>
<div class="abs" style="left:1611.0px;top:1147.0px;width:2.0px;height:29.0px;background:#8a949a;"></div>
<div class="abs" style="left:1619.3px;top:1143.0px;width:90.4px;height:35.7px;background:#fff;border:1px solid #b9bec2;"></div>
<div class="abs" style="left:1672.8px;top:1144.0px;width:36.0px;height:33.7px;background:#dcdcdc;border-left:1px solid #c0c0c0;"></div>
<svg style="left:1681.0px;top:1155.0px" width="19" height="11" viewBox="0 0 19 11"><path d="M0 0h19l-9.5 11z" fill="#7d8890"/></svg>
<div class="t" style="left:1625.7px;top:1149.9px;font-size:20px;color:#000;transform:scaleX(0.9124);">30</div>
<div class="t" style="left:1714.0px;top:1152.0px;font-size:22px;color:#e4eaee;transform:scaleX(0.7922);">per page</div>
<div class="abs" style="left:1793.7px;top:1147.0px;width:2.0px;height:29.0px;background:#8a949a;"></div>
<div class="abs" style="left:1801.0px;top:1143.0px;width:110.0px;height:35.7px;background:#fff;border:1px solid #b9bec2;"></div>
<div class="abs" style="left:1873.0px;top:1144.0px;width:40.0px;height:33.7px;background:#dcdcdc;border-left:1px solid #c0c0c0;"></div>
<svg style="left:1880.0px;top:1155.0px" width="19" height="11" viewBox="0 0 19 11"><path d="M0 0h19l-9.5 11z" fill="#7d8890"/></svg>
<div class="t" style="left:1808.0px;top:1149.9px;font-size:20px;color:#000;transform:scaleX(0.9809);">DESC</div>
<div class="abs" style="left:0.0px;top:1186.0px;width:1905.0px;height:52.0px;background:#283238;"></div>
<div class="t" style="left:14.0px;top:1199.2px;font-size:23px;color:#b9c4c8;transform:scaleX(0.7342);">admin</div>
<div class="abs" style="left:74.0px;top:1200.0px;width:2.0px;height:23.0px;background:#b9c4c8;"></div>
<div class="t" style="left:85.0px;top:1199.2px;font-size:23px;color:#b9c4c8;transform:scaleX(0.7673);">Logout</div>
<div class="abs" style="left:149.5px;top:1200.0px;width:3.0px;height:23.0px;background:#c5ced2;"></div>
<div class="t" style="left:162.0px;top:1199.2px;font-size:23px;color:#b9c4c8;transform:scaleX(0.8245);">Last Login Time: 06/05/2023 18:36:46</div>
<svg style="left:1722.0px;top:1199.0px" width="29" height="28" viewBox="0 0 29 28"><g fill="#3a83b5"><rect x="0" y="0" width="7" height="7"/><rect x="0" y="10" width="7" height="7"/><rect x="0" y="20" width="7" height="7"/></g><g fill="#fff"><rect x="2" y="2" width="3" height="3"/><rect x="2" y="12" width="3" height="3"/><rect x="2" y="22" width="3" height="3"/></g><rect x="11" y="3" width="17" height="2" fill="#e8eef0"/><rect x="11" y="13" width="4" height="2" fill="#e8eef0"/><rect x="11" y="23" width="4" height="2" fill="#e8eef0"/><circle cx="21" cy="19" r="7" fill="#f2b81f" stroke="#c98a10" stroke-width="1.5" stroke-dasharray="2 1.6"/></svg>
<div class="t" style="left:1755.4px;top:1198.4px;font-size:22.5px;color:#b9c4c8;transform:scaleX(0.7963);">Tasks</div>
<div class="abs" style="left:1812.5px;top:1200.0px;width:3.0px;height:24.0px;background:#c5ced2;"></div>
<div class="t" style="left:1826.5px;top:1198.4px;font-size:22.5px;color:#b9c4c8;transform:scaleX(0.7690);">Language</div>
<div class="abs" style="left:0.0px;top:1208.6px;width:137.6px;height:30.0px;background:#2b2f33;border:1px solid #6d7174;border-left:none;border-bottom:none;"></div>
<div class="t" style="left:-1.0px;top:1212.5px;font-size:19px;color:#f6efe0;transform:scaleX(0.9124);">javascript:void(0)</div>
<div class="abs" style="left:386px;top:179px;width:596px;height:63.69999999999999px;border:6px solid #fc3f42;border-radius:9px;box-shadow:2px 3px 4px rgba(0,0,0,0.38), inset 1px 3px 4px rgba(0,0,0,0.45)"></div>
<div class="abs" style="left:361px;top:344px;width:63px;height:41.60000000000002px;border:6px solid #fc3f42;border-radius:9px;box-shadow:2px 3px 4px rgba(0,0,0,0.38), inset 1px 3px 4px rgba(0,0,0,0.45)"></div>
<div class="abs" style="left:826px;top:335.5px;width:411px;height:48.5px;border:6px solid #fc3f42;border-radius:9px;box-shadow:2px 3px 4px rgba(0,0,0,0.38), inset 1px 3px 4px rgba(0,0,0,0.45)"></div>
<div class="abs" style="left:1238px;top:335.5px;width:163px;height:48.5px;border:6px solid #fc3f42;border-radius:9px;box-shadow:2px 3px 4px rgba(0,0,0,0.38), inset 1px 3px 4px rgba(0,0,0,0.45)"></div>
<div class="abs" style="left:1237px;top:508px;width:164.5px;height:47px;border:6px solid #fc3f42;border-radius:9px;box-shadow:2px 3px 4px rgba(0,0,0,0.38), inset 1px 3px 4px rgba(0,0,0,0.45)"></div>
<svg style="left:430.0px;top:375.0px" width="160" height="140" viewBox="0 0 160 140"><defs><filter id="sh" x="-20%" y="-20%" width="140%" height="140%"><feDropShadow dx="1.5" dy="2.5" stdDeviation="1.5" flood-color="#000" flood-opacity="0.4"/></filter></defs>
<g filter="url(#sh)"><line x1="139.5" y1="120.5" x2="26" y2="24" stroke="#fc3f42" stroke-width="6.8" stroke-linecap="round"/>
<path d="M11.2 11.4 L37 17.2 L21.5 35.8 Z" fill="#fc3f42" stroke="#fc3f42" stroke-width="1.5" stroke-linejoin="round"/></g></svg>
</body></html>
